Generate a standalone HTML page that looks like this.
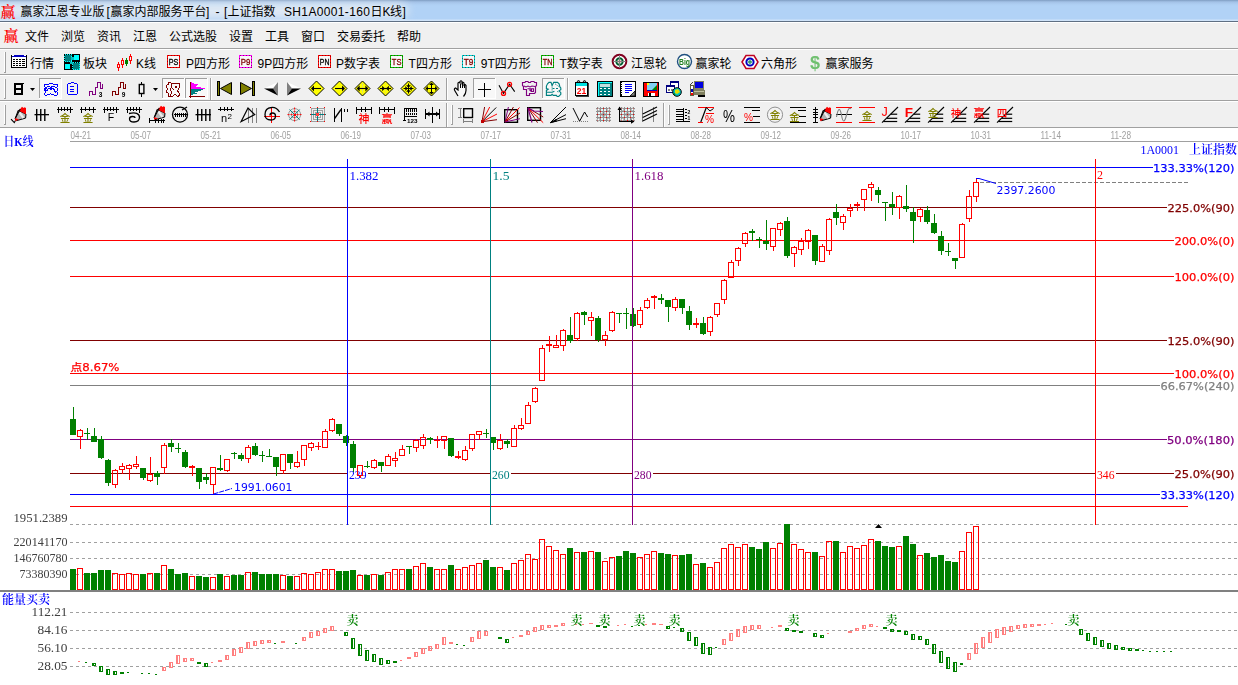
<!DOCTYPE html>
<html><head><meta charset="utf-8"><title>赢家江恩专业版</title>
<style>
html,body{margin:0;padding:0;background:#fff;overflow:hidden}
body{width:1238px;height:685px;position:relative;font-family:"Liberation Sans","Noto Sans CJK SC",sans-serif;font-size:12px;color:#000}
#title{position:absolute;left:0;top:0;width:1238px;height:21px;overflow:hidden;background:linear-gradient(to bottom,#7d9cc1 0,#93b1d6 1px,#a3c2e7 2px,#adcdf1 4px,#b1d2f6 6px,#b1d2f6 19px,#cfe3f9 20px,#cfe3f9 21px)}
#glow{position:absolute;left:-20px;top:3px;width:428px;height:15px;background:rgba(238,240,243,.8);filter:blur(5px);border-radius:8px}
#title .tt{position:absolute;top:3.6px;line-height:17px;font-size:12px;white-space:pre}
.logo{position:absolute;color:#ff0000;font-family:"Liberation Serif","Noto Serif CJK SC",serif;font-size:15px;line-height:15px;font-weight:600}
#l1{position:absolute;left:0;top:21px;width:1238px;height:1px;background:#5f6f83}
#l2{position:absolute;left:0;top:22px;width:1238px;height:1px;background:#fff}
#chrome{position:absolute;left:0;top:23px;width:1238px;height:105px;background:#f0f0f0}
.sep{position:absolute;left:0;width:1238px;height:1px;background:#a0a0a0}
.sepw{position:absolute;left:0;width:1238px;height:1px;background:#fff}
.mi{position:absolute;top:29px;margin-left:-1px;line-height:16px;white-space:nowrap}
.tb{position:absolute;top:56px;margin-left:-1px;line-height:16px;white-space:nowrap}
svg{position:absolute;left:0;top:0}
</style></head><body>
<div id="title"><div id="glow"></div><span class="logo" style="left:0.5px;top:4.5px">赢</span><span class="tt" style="left:20.5px">赢家江恩专业版</span><span class="tt" style="left:106.5px">[</span><span class="tt" style="left:110.5px">赢家内部服务平台</span><span class="tt" style="left:206px">] </span><span class="tt" style="left:215.5px">- </span><span class="tt" style="left:224px">[</span><span class="tt" style="left:227.5px">上证指数  </span><span class="tt" style="left:284px;letter-spacing:0.35px">SH1A0001-160</span><span class="tt" style="left:370.5px">日</span><span class="tt" style="left:382.5px">K</span><span class="tt" style="left:390px">线</span><span class="tt" style="left:402.5px">]</span></div>
<div id="l1"></div><div id="l2"></div>
<div id="chrome"></div>
<span class="logo" style="left:3.5px;top:28.5px">赢</span>
<span class="mi" style="left:26px">文件</span><span class="mi" style="left:62px">浏览</span><span class="mi" style="left:98px">资讯</span><span class="mi" style="left:134px">江恩</span><span class="mi" style="left:170px">公式选股</span><span class="mi" style="left:230px">设置</span><span class="mi" style="left:266px">工具</span><span class="mi" style="left:302px">窗口</span><span class="mi" style="left:338px">交易委托</span><span class="mi" style="left:398px">帮助</span>
<div class="sep" style="top:48px"></div><div class="sepw" style="top:49px"></div>
<span class="tb" style="left:31px">行情</span><span class="tb" style="left:84px">板块</span><span class="tb" style="left:137px">K线</span><span class="tb" style="left:187px">P四方形</span><span class="tb" style="left:258.5px">9P四方形</span><span class="tb" style="left:337px">P数字表</span><span class="tb" style="left:409.6px">T四方形</span><span class="tb" style="left:481.8px">9T四方形</span><span class="tb" style="left:560.5px">T数字表</span><span class="tb" style="left:632px">江恩轮</span><span class="tb" style="left:696.5px">赢家轮</span><span class="tb" style="left:762px">六角形</span><span class="tb" style="left:826.5px">赢家服务</span>
<div class="sep" style="top:74px"></div><div class="sepw" style="top:75px"></div>
<div class="sep" style="top:100px"></div><div class="sepw" style="top:101px"></div>
<div class="sep" style="top:127px"></div>
<svg width="1238" height="685" viewBox="0 0 1238 685" shape-rendering="crispEdges" style="will-change:transform">
<rect x="70" y="141" width="1168" height="1" fill="#a0a0a0"/>
<text x="70.5" y="139" fill="#a0a0a0" font-size="10.4" font-family="'Liberation Sans','Noto Sans CJK SC',sans-serif" textLength="20.5" lengthAdjust="spacingAndGlyphs">04-21</text>
<text x="130.5" y="139" fill="#a0a0a0" font-size="10.4" font-family="'Liberation Sans','Noto Sans CJK SC',sans-serif" textLength="20.5" lengthAdjust="spacingAndGlyphs">05-07</text>
<text x="200.5" y="139" fill="#a0a0a0" font-size="10.4" font-family="'Liberation Sans','Noto Sans CJK SC',sans-serif" textLength="20.5" lengthAdjust="spacingAndGlyphs">05-21</text>
<text x="270.5" y="139" fill="#a0a0a0" font-size="10.4" font-family="'Liberation Sans','Noto Sans CJK SC',sans-serif" textLength="20.5" lengthAdjust="spacingAndGlyphs">06-05</text>
<text x="340.5" y="139" fill="#a0a0a0" font-size="10.4" font-family="'Liberation Sans','Noto Sans CJK SC',sans-serif" textLength="20.5" lengthAdjust="spacingAndGlyphs">06-19</text>
<text x="410.5" y="139" fill="#a0a0a0" font-size="10.4" font-family="'Liberation Sans','Noto Sans CJK SC',sans-serif" textLength="20.5" lengthAdjust="spacingAndGlyphs">07-03</text>
<text x="480.5" y="139" fill="#a0a0a0" font-size="10.4" font-family="'Liberation Sans','Noto Sans CJK SC',sans-serif" textLength="20.5" lengthAdjust="spacingAndGlyphs">07-17</text>
<text x="550.5" y="139" fill="#a0a0a0" font-size="10.4" font-family="'Liberation Sans','Noto Sans CJK SC',sans-serif" textLength="20.5" lengthAdjust="spacingAndGlyphs">07-31</text>
<text x="620.5" y="139" fill="#a0a0a0" font-size="10.4" font-family="'Liberation Sans','Noto Sans CJK SC',sans-serif" textLength="20.5" lengthAdjust="spacingAndGlyphs">08-14</text>
<text x="690.5" y="139" fill="#a0a0a0" font-size="10.4" font-family="'Liberation Sans','Noto Sans CJK SC',sans-serif" textLength="20.5" lengthAdjust="spacingAndGlyphs">08-28</text>
<text x="760.5" y="139" fill="#a0a0a0" font-size="10.4" font-family="'Liberation Sans','Noto Sans CJK SC',sans-serif" textLength="20.5" lengthAdjust="spacingAndGlyphs">09-12</text>
<text x="830.5" y="139" fill="#a0a0a0" font-size="10.4" font-family="'Liberation Sans','Noto Sans CJK SC',sans-serif" textLength="20.5" lengthAdjust="spacingAndGlyphs">09-26</text>
<text x="900.5" y="139" fill="#a0a0a0" font-size="10.4" font-family="'Liberation Sans','Noto Sans CJK SC',sans-serif" textLength="20.5" lengthAdjust="spacingAndGlyphs">10-17</text>
<text x="970.5" y="139" fill="#a0a0a0" font-size="10.4" font-family="'Liberation Sans','Noto Sans CJK SC',sans-serif" textLength="20.5" lengthAdjust="spacingAndGlyphs">10-31</text>
<text x="1040.5" y="139" fill="#a0a0a0" font-size="10.4" font-family="'Liberation Sans','Noto Sans CJK SC',sans-serif" textLength="20.5" lengthAdjust="spacingAndGlyphs">11-14</text>
<text x="1110.5" y="139" fill="#a0a0a0" font-size="10.4" font-family="'Liberation Sans','Noto Sans CJK SC',sans-serif" textLength="20.5" lengthAdjust="spacingAndGlyphs">11-28</text>
<text x="3.5" y="146" fill="#0000ff" font-size="12" font-family="'Liberation Serif','Noto Serif CJK SC',serif" textLength="30" lengthAdjust="spacingAndGlyphs" font-weight="600">日K线</text>
<text x="1140.5" y="154" fill="#0000ff" font-size="12" font-family="'Liberation Serif','Noto Serif CJK SC',serif" textLength="38.5" lengthAdjust="spacingAndGlyphs">1A0001</text>
<text x="1189" y="154" fill="#0000ff" font-size="12" font-family="'Liberation Serif','Noto Serif CJK SC',serif" font-weight="600">上证指数</text>
<line x1="70" x2="1238" y1="524.5" y2="524.5" stroke="#a0a0a0" stroke-dasharray="3 3"/>
<line x1="70" x2="1238" y1="542.5" y2="542.5" stroke="#a0a0a0" stroke-dasharray="3 3"/>
<line x1="70" x2="1238" y1="558.5" y2="558.5" stroke="#a0a0a0" stroke-dasharray="3 3"/>
<line x1="70" x2="1238" y1="574.5" y2="574.5" stroke="#a0a0a0" stroke-dasharray="3 3"/>
<line x1="70" x2="1238" y1="612.5" y2="612.5" stroke="#a0a0a0" stroke-dasharray="3 3"/>
<line x1="70" x2="1238" y1="630.5" y2="630.5" stroke="#a0a0a0" stroke-dasharray="3 3"/>
<line x1="70" x2="1238" y1="648.5" y2="648.5" stroke="#a0a0a0" stroke-dasharray="3 3"/>
<line x1="70" x2="1238" y1="666.5" y2="666.5" stroke="#a0a0a0" stroke-dasharray="3 3"/>
<rect x="70" y="167" width="1083" height="1" fill="#0000ff"/>
<rect x="70" y="207" width="1097" height="1" fill="#800000"/>
<rect x="70" y="240" width="1104" height="1" fill="#ff0000"/>
<rect x="70" y="276" width="1104" height="1" fill="#ff0000"/>
<rect x="70" y="340" width="1097" height="1" fill="#800000"/>
<rect x="70" y="373" width="1104" height="1" fill="#ff0000"/>
<rect x="70" y="385" width="1090" height="1" fill="#808080"/>
<rect x="70" y="439" width="1097" height="1" fill="#800080"/>
<rect x="70" y="473" width="1104" height="1" fill="#800000"/>
<rect x="70" y="494" width="1090" height="1" fill="#0000ff"/>
<rect x="70" y="506" width="1118" height="1" fill="#ff0000"/>
<line x1="980" x2="1189" y1="182.5" y2="182.5" stroke="#808080" stroke-dasharray="4 2"/>
<rect x="348" y="470" width="19.5" height="11" fill="#fff"/>
<text x="349" y="479" fill="#0000ff" font-size="12" font-family="'Liberation Serif','Noto Serif CJK SC',serif" textLength="17.5" lengthAdjust="spacingAndGlyphs">239</text>
<rect x="491" y="470" width="19.5" height="11" fill="#fff"/>
<text x="492" y="479" fill="#008080" font-size="12" font-family="'Liberation Serif','Noto Serif CJK SC',serif" textLength="17.5" lengthAdjust="spacingAndGlyphs">260</text>
<rect x="633" y="470" width="19.5" height="11" fill="#fff"/>
<text x="634" y="479" fill="#800080" font-size="12" font-family="'Liberation Serif','Noto Serif CJK SC',serif" textLength="17.5" lengthAdjust="spacingAndGlyphs">280</text>
<rect x="1096" y="470" width="19.5" height="11" fill="#fff"/>
<text x="1097" y="479" fill="#ff0000" font-size="12" font-family="'Liberation Serif','Noto Serif CJK SC',serif" textLength="17.5" lengthAdjust="spacingAndGlyphs">346</text>
<rect x="73" y="407" width="1" height="28" fill="#008000"/>
<rect x="70" y="419" width="6" height="16" fill="#008000"/>
<rect x="77.5" y="430.5" width="5" height="6" fill="none" stroke="#ff0000"/>
<rect x="80" y="429" width="1" height="1" fill="#ff0000"/>
<rect x="80" y="437" width="1" height="12" fill="#ff0000"/>
<rect x="87" y="428" width="1" height="12" fill="#008000"/>
<rect x="84" y="433" width="6" height="1" fill="#008000"/>
<rect x="94" y="428" width="1" height="14" fill="#008000"/>
<rect x="91" y="436" width="6" height="6" fill="#008000"/>
<rect x="101" y="436" width="1" height="23" fill="#008000"/>
<rect x="98" y="439" width="6" height="19" fill="#008000"/>
<rect x="108" y="459" width="1" height="27" fill="#008000"/>
<rect x="105" y="460" width="6" height="23" fill="#008000"/>
<rect x="112.5" y="470.5" width="5" height="14" fill="none" stroke="#ff0000"/>
<rect x="115" y="469" width="1" height="1" fill="#ff0000"/>
<rect x="115" y="485" width="1" height="3" fill="#ff0000"/>
<rect x="119.5" y="466.5" width="5" height="3" fill="none" stroke="#ff0000"/>
<rect x="122" y="463" width="1" height="3" fill="#ff0000"/>
<rect x="122" y="470" width="1" height="4" fill="#ff0000"/>
<rect x="126.5" y="465.5" width="5" height="3" fill="none" stroke="#ff0000"/>
<rect x="129" y="464" width="1" height="1" fill="#ff0000"/>
<rect x="129" y="469" width="1" height="11" fill="#ff0000"/>
<rect x="133.5" y="464.5" width="5" height="2" fill="none" stroke="#ff0000"/>
<rect x="136" y="456" width="1" height="8" fill="#ff0000"/>
<rect x="136" y="467" width="1" height="2" fill="#ff0000"/>
<rect x="143" y="468" width="1" height="12" fill="#008000"/>
<rect x="140" y="468" width="6" height="10" fill="#008000"/>
<rect x="147.5" y="474.5" width="5" height="6" fill="none" stroke="#ff0000"/>
<rect x="150" y="457" width="1" height="17" fill="#ff0000"/>
<rect x="150" y="481" width="1" height="1" fill="#ff0000"/>
<rect x="157" y="471" width="1" height="14" fill="#008000"/>
<rect x="154" y="473" width="6" height="4" fill="#008000"/>
<rect x="161.5" y="445.5" width="5" height="22" fill="none" stroke="#ff0000"/>
<rect x="164" y="443" width="1" height="2" fill="#ff0000"/>
<rect x="164" y="468" width="1" height="6" fill="#ff0000"/>
<rect x="171" y="439" width="1" height="13" fill="#008000"/>
<rect x="168" y="443" width="6" height="4" fill="#008000"/>
<rect x="178" y="443" width="1" height="10" fill="#008000"/>
<rect x="175" y="448" width="6" height="1" fill="#008000"/>
<rect x="185" y="450" width="1" height="18" fill="#008000"/>
<rect x="182" y="452" width="6" height="15" fill="#008000"/>
<rect x="189.5" y="466.5" width="5" height="1" fill="none" stroke="#ff0000"/>
<rect x="192" y="465" width="1" height="1" fill="#ff0000"/>
<rect x="192" y="468" width="1" height="8" fill="#ff0000"/>
<rect x="199" y="468" width="1" height="21" fill="#008000"/>
<rect x="196" y="468" width="6" height="14" fill="#008000"/>
<rect x="206" y="473" width="1" height="11" fill="#008000"/>
<rect x="203" y="477" width="6" height="3" fill="#008000"/>
<rect x="210.5" y="467.5" width="5" height="17" fill="none" stroke="#ff0000"/>
<rect x="213" y="485" width="1" height="9" fill="#ff0000"/>
<rect x="220" y="455" width="1" height="16" fill="#008000"/>
<rect x="217" y="468" width="6" height="2" fill="#008000"/>
<rect x="224.5" y="459.5" width="5" height="11" fill="none" stroke="#ff0000"/>
<rect x="227" y="471" width="1" height="1" fill="#ff0000"/>
<rect x="234" y="452" width="1" height="7" fill="#008000"/>
<rect x="231" y="453" width="6" height="1" fill="#008000"/>
<rect x="241" y="453" width="1" height="8" fill="#008000"/>
<rect x="238" y="455" width="6" height="4" fill="#008000"/>
<rect x="245.5" y="447.5" width="5" height="11" fill="none" stroke="#ff0000"/>
<rect x="248" y="445" width="1" height="2" fill="#ff0000"/>
<rect x="248" y="459" width="1" height="4" fill="#ff0000"/>
<rect x="255" y="443" width="1" height="13" fill="#008000"/>
<rect x="252" y="446" width="6" height="9" fill="#008000"/>
<rect x="262" y="451" width="1" height="11" fill="#008000"/>
<rect x="259" y="455" width="6" height="1" fill="#008000"/>
<rect x="269" y="449" width="1" height="8" fill="#008000"/>
<rect x="266" y="456" width="6" height="1" fill="#008000"/>
<rect x="276" y="457" width="1" height="19" fill="#008000"/>
<rect x="273" y="457" width="6" height="10" fill="#008000"/>
<rect x="280.5" y="454.5" width="5" height="16" fill="none" stroke="#ff0000"/>
<rect x="283" y="471" width="1" height="3" fill="#ff0000"/>
<rect x="290" y="454" width="1" height="15" fill="#008000"/>
<rect x="287" y="454" width="6" height="9" fill="#008000"/>
<rect x="294.5" y="462.5" width="5" height="4" fill="none" stroke="#ff0000"/>
<rect x="297" y="451" width="1" height="11" fill="#ff0000"/>
<rect x="297" y="467" width="1" height="1" fill="#ff0000"/>
<rect x="301.5" y="445.5" width="5" height="14" fill="none" stroke="#ff0000"/>
<rect x="304" y="460" width="1" height="6" fill="#ff0000"/>
<rect x="308.5" y="443.5" width="5" height="4" fill="none" stroke="#ff0000"/>
<rect x="311" y="442" width="1" height="1" fill="#ff0000"/>
<rect x="311" y="448" width="1" height="3" fill="#ff0000"/>
<rect x="315" y="446" width="6" height="1" fill="#ff0000"/>
<rect x="318" y="442" width="1" height="4" fill="#ff0000"/>
<rect x="318" y="447" width="1" height="3" fill="#ff0000"/>
<rect x="322.5" y="431.5" width="5" height="16" fill="none" stroke="#ff0000"/>
<rect x="325" y="429" width="1" height="2" fill="#ff0000"/>
<rect x="329.5" y="419.5" width="5" height="11" fill="none" stroke="#ff0000"/>
<rect x="332" y="418" width="1" height="1" fill="#ff0000"/>
<rect x="332" y="431" width="1" height="1" fill="#ff0000"/>
<rect x="339" y="424" width="1" height="12" fill="#008000"/>
<rect x="336" y="424" width="6" height="10" fill="#008000"/>
<rect x="346" y="435" width="1" height="11" fill="#008000"/>
<rect x="343" y="436" width="6" height="7" fill="#008000"/>
<rect x="353" y="441" width="1" height="31" fill="#008000"/>
<rect x="350" y="444" width="6" height="24" fill="#008000"/>
<rect x="357.5" y="465.5" width="5" height="10" fill="none" stroke="#ff0000"/>
<rect x="360" y="476" width="1" height="2" fill="#ff0000"/>
<rect x="367" y="461" width="1" height="7" fill="#008000"/>
<rect x="364" y="466" width="6" height="1" fill="#008000"/>
<rect x="371.5" y="460.5" width="5" height="7" fill="none" stroke="#ff0000"/>
<rect x="374" y="459" width="1" height="1" fill="#ff0000"/>
<rect x="374" y="468" width="1" height="1" fill="#ff0000"/>
<rect x="381" y="462" width="1" height="10" fill="#008000"/>
<rect x="378" y="462" width="6" height="4" fill="#008000"/>
<rect x="385.5" y="456.5" width="5" height="9" fill="none" stroke="#ff0000"/>
<rect x="388" y="454" width="1" height="2" fill="#ff0000"/>
<rect x="392.5" y="458.5" width="5" height="2" fill="none" stroke="#ff0000"/>
<rect x="395" y="452" width="1" height="6" fill="#ff0000"/>
<rect x="395" y="461" width="1" height="6" fill="#ff0000"/>
<rect x="399.5" y="449.5" width="5" height="6" fill="none" stroke="#ff0000"/>
<rect x="402" y="445" width="1" height="4" fill="#ff0000"/>
<rect x="409" y="446" width="1" height="8" fill="#008000"/>
<rect x="406" y="446" width="6" height="1" fill="#008000"/>
<rect x="413.5" y="440.5" width="5" height="7" fill="none" stroke="#ff0000"/>
<rect x="416" y="439" width="1" height="1" fill="#ff0000"/>
<rect x="416" y="448" width="1" height="4" fill="#ff0000"/>
<rect x="420.5" y="437.5" width="5" height="8" fill="none" stroke="#ff0000"/>
<rect x="423" y="434" width="1" height="3" fill="#ff0000"/>
<rect x="423" y="446" width="1" height="3" fill="#ff0000"/>
<rect x="430" y="437" width="1" height="7" fill="#008000"/>
<rect x="427" y="438" width="6" height="2" fill="#008000"/>
<rect x="434" y="440" width="6" height="1" fill="#ff0000"/>
<rect x="437" y="436" width="1" height="4" fill="#ff0000"/>
<rect x="437" y="441" width="1" height="7" fill="#ff0000"/>
<rect x="441.5" y="436.5" width="5" height="4" fill="none" stroke="#ff0000"/>
<rect x="444" y="441" width="1" height="8" fill="#ff0000"/>
<rect x="451" y="438" width="1" height="19" fill="#008000"/>
<rect x="448" y="438" width="6" height="18" fill="#008000"/>
<rect x="455.5" y="456.5" width="5" height="1" fill="none" stroke="#ff0000"/>
<rect x="458" y="451" width="1" height="5" fill="#ff0000"/>
<rect x="458" y="458" width="1" height="1" fill="#ff0000"/>
<rect x="462.5" y="450.5" width="5" height="9" fill="none" stroke="#ff0000"/>
<rect x="465" y="446" width="1" height="4" fill="#ff0000"/>
<rect x="465" y="460" width="1" height="1" fill="#ff0000"/>
<rect x="469.5" y="434.5" width="5" height="14" fill="none" stroke="#ff0000"/>
<rect x="472" y="449" width="1" height="2" fill="#ff0000"/>
<rect x="476.5" y="431.5" width="5" height="3" fill="none" stroke="#ff0000"/>
<rect x="479" y="435" width="1" height="5" fill="#ff0000"/>
<rect x="486" y="429" width="1" height="9" fill="#008000"/>
<rect x="483" y="433" width="6" height="1" fill="#008000"/>
<rect x="493" y="437" width="1" height="13" fill="#008000"/>
<rect x="490" y="437" width="6" height="6" fill="#008000"/>
<rect x="497.5" y="440.5" width="5" height="8" fill="none" stroke="#ff0000"/>
<rect x="500" y="434" width="1" height="6" fill="#ff0000"/>
<rect x="500" y="449" width="1" height="1" fill="#ff0000"/>
<rect x="507" y="439" width="1" height="9" fill="#008000"/>
<rect x="504" y="441" width="6" height="3" fill="#008000"/>
<rect x="511.5" y="428.5" width="5" height="18" fill="none" stroke="#ff0000"/>
<rect x="514" y="425" width="1" height="3" fill="#ff0000"/>
<rect x="518.5" y="425.5" width="5" height="3" fill="none" stroke="#ff0000"/>
<rect x="521" y="418" width="1" height="7" fill="#ff0000"/>
<rect x="521" y="429" width="1" height="1" fill="#ff0000"/>
<rect x="525.5" y="405.5" width="5" height="18" fill="none" stroke="#ff0000"/>
<rect x="528" y="402" width="1" height="3" fill="#ff0000"/>
<rect x="532.5" y="388.5" width="5" height="13" fill="none" stroke="#ff0000"/>
<rect x="535" y="387" width="1" height="1" fill="#ff0000"/>
<rect x="535" y="402" width="1" height="1" fill="#ff0000"/>
<rect x="539.5" y="348.5" width="5" height="32" fill="none" stroke="#ff0000"/>
<rect x="542" y="345" width="1" height="3" fill="#ff0000"/>
<rect x="546.5" y="344.5" width="5" height="1" fill="none" stroke="#ff0000"/>
<rect x="549" y="336" width="1" height="8" fill="#ff0000"/>
<rect x="549" y="346" width="1" height="6" fill="#ff0000"/>
<rect x="553.5" y="345.5" width="5" height="2" fill="none" stroke="#ff0000"/>
<rect x="556" y="335" width="1" height="10" fill="#ff0000"/>
<rect x="560.5" y="330.5" width="5" height="15" fill="none" stroke="#ff0000"/>
<rect x="563" y="329" width="1" height="1" fill="#ff0000"/>
<rect x="563" y="346" width="1" height="5" fill="#ff0000"/>
<rect x="570" y="317" width="1" height="26" fill="#008000"/>
<rect x="567" y="335" width="6" height="6" fill="#008000"/>
<rect x="574.5" y="313.5" width="5" height="25" fill="none" stroke="#ff0000"/>
<rect x="577" y="312" width="1" height="1" fill="#ff0000"/>
<rect x="577" y="339" width="1" height="2" fill="#ff0000"/>
<rect x="584" y="311" width="1" height="14" fill="#008000"/>
<rect x="581" y="312" width="6" height="3" fill="#008000"/>
<rect x="588.5" y="317.5" width="5" height="3" fill="none" stroke="#ff0000"/>
<rect x="591" y="312" width="1" height="5" fill="#ff0000"/>
<rect x="591" y="321" width="1" height="15" fill="#ff0000"/>
<rect x="598" y="316" width="1" height="26" fill="#008000"/>
<rect x="595" y="318" width="6" height="22" fill="#008000"/>
<rect x="602.5" y="335.5" width="5" height="4" fill="none" stroke="#ff0000"/>
<rect x="605" y="331" width="1" height="4" fill="#ff0000"/>
<rect x="605" y="340" width="1" height="6" fill="#ff0000"/>
<rect x="609.5" y="312.5" width="5" height="18" fill="none" stroke="#ff0000"/>
<rect x="612" y="311" width="1" height="1" fill="#ff0000"/>
<rect x="612" y="331" width="1" height="1" fill="#ff0000"/>
<rect x="619" y="313" width="1" height="10" fill="#008000"/>
<rect x="616" y="313" width="6" height="1" fill="#008000"/>
<rect x="626" y="308" width="1" height="21" fill="#008000"/>
<rect x="623" y="313" width="6" height="1" fill="#008000"/>
<rect x="633" y="308" width="1" height="19" fill="#008000"/>
<rect x="630" y="314" width="6" height="12" fill="#008000"/>
<rect x="637.5" y="310.5" width="5" height="14" fill="none" stroke="#ff0000"/>
<rect x="640" y="307" width="1" height="3" fill="#ff0000"/>
<rect x="640" y="325" width="1" height="3" fill="#ff0000"/>
<rect x="644.5" y="300.5" width="5" height="7" fill="none" stroke="#ff0000"/>
<rect x="647" y="298" width="1" height="2" fill="#ff0000"/>
<rect x="647" y="308" width="1" height="1" fill="#ff0000"/>
<rect x="651.5" y="296.5" width="5" height="1" fill="none" stroke="#ff0000"/>
<rect x="654" y="295" width="1" height="1" fill="#ff0000"/>
<rect x="654" y="298" width="1" height="11" fill="#ff0000"/>
<rect x="661" y="294" width="1" height="10" fill="#008000"/>
<rect x="658" y="298" width="6" height="2" fill="#008000"/>
<rect x="668" y="300" width="1" height="22" fill="#008000"/>
<rect x="665" y="300" width="6" height="7" fill="#008000"/>
<rect x="672.5" y="299.5" width="5" height="8" fill="none" stroke="#ff0000"/>
<rect x="675" y="297" width="1" height="2" fill="#ff0000"/>
<rect x="675" y="308" width="1" height="3" fill="#ff0000"/>
<rect x="682" y="299" width="1" height="15" fill="#008000"/>
<rect x="679" y="299" width="6" height="9" fill="#008000"/>
<rect x="689" y="306" width="1" height="24" fill="#008000"/>
<rect x="686" y="311" width="6" height="14" fill="#008000"/>
<rect x="693.5" y="323.5" width="5" height="1" fill="none" stroke="#ff0000"/>
<rect x="696" y="318" width="1" height="5" fill="#ff0000"/>
<rect x="696" y="325" width="1" height="3" fill="#ff0000"/>
<rect x="703" y="317" width="1" height="18" fill="#008000"/>
<rect x="700" y="323" width="6" height="11" fill="#008000"/>
<rect x="707.5" y="317.5" width="5" height="14" fill="none" stroke="#ff0000"/>
<rect x="710" y="316" width="1" height="1" fill="#ff0000"/>
<rect x="710" y="332" width="1" height="4" fill="#ff0000"/>
<rect x="714.5" y="303.5" width="5" height="11" fill="none" stroke="#ff0000"/>
<rect x="717" y="315" width="1" height="2" fill="#ff0000"/>
<rect x="721.5" y="280.5" width="5" height="19" fill="none" stroke="#ff0000"/>
<rect x="724" y="279" width="1" height="1" fill="#ff0000"/>
<rect x="724" y="300" width="1" height="4" fill="#ff0000"/>
<rect x="728.5" y="262.5" width="5" height="15" fill="none" stroke="#ff0000"/>
<rect x="731" y="260" width="1" height="2" fill="#ff0000"/>
<rect x="735.5" y="248.5" width="5" height="12" fill="none" stroke="#ff0000"/>
<rect x="738" y="247" width="1" height="1" fill="#ff0000"/>
<rect x="738" y="261" width="1" height="5" fill="#ff0000"/>
<rect x="742.5" y="233.5" width="5" height="10" fill="none" stroke="#ff0000"/>
<rect x="745" y="232" width="1" height="1" fill="#ff0000"/>
<rect x="745" y="244" width="1" height="3" fill="#ff0000"/>
<rect x="752" y="229" width="1" height="12" fill="#008000"/>
<rect x="749" y="231" width="6" height="2" fill="#008000"/>
<rect x="759" y="237" width="1" height="11" fill="#008000"/>
<rect x="756" y="239" width="6" height="1" fill="#008000"/>
<rect x="766" y="220" width="1" height="30" fill="#008000"/>
<rect x="763" y="241" width="6" height="3" fill="#008000"/>
<rect x="770.5" y="228.5" width="5" height="18" fill="none" stroke="#ff0000"/>
<rect x="773" y="247" width="1" height="4" fill="#ff0000"/>
<rect x="777.5" y="223.5" width="5" height="6" fill="none" stroke="#ff0000"/>
<rect x="780" y="222" width="1" height="1" fill="#ff0000"/>
<rect x="780" y="230" width="1" height="6" fill="#ff0000"/>
<rect x="787" y="217" width="1" height="41" fill="#008000"/>
<rect x="784" y="221" width="6" height="35" fill="#008000"/>
<rect x="791.5" y="247.5" width="5" height="6" fill="none" stroke="#ff0000"/>
<rect x="794" y="246" width="1" height="1" fill="#ff0000"/>
<rect x="794" y="254" width="1" height="13" fill="#ff0000"/>
<rect x="798.5" y="241.5" width="5" height="8" fill="none" stroke="#ff0000"/>
<rect x="801" y="238" width="1" height="3" fill="#ff0000"/>
<rect x="801" y="250" width="1" height="5" fill="#ff0000"/>
<rect x="805.5" y="230.5" width="5" height="11" fill="none" stroke="#ff0000"/>
<rect x="808" y="229" width="1" height="1" fill="#ff0000"/>
<rect x="808" y="242" width="1" height="7" fill="#ff0000"/>
<rect x="815" y="235" width="1" height="30" fill="#008000"/>
<rect x="812" y="235" width="6" height="26" fill="#008000"/>
<rect x="819.5" y="246.5" width="5" height="15" fill="none" stroke="#ff0000"/>
<rect x="822" y="244" width="1" height="2" fill="#ff0000"/>
<rect x="826.5" y="219.5" width="5" height="31" fill="none" stroke="#ff0000"/>
<rect x="829" y="218" width="1" height="1" fill="#ff0000"/>
<rect x="829" y="251" width="1" height="4" fill="#ff0000"/>
<rect x="836" y="204" width="1" height="21" fill="#008000"/>
<rect x="833" y="212" width="6" height="6" fill="#008000"/>
<rect x="840.5" y="216.5" width="5" height="6" fill="none" stroke="#ff0000"/>
<rect x="843" y="214" width="1" height="2" fill="#ff0000"/>
<rect x="843" y="223" width="1" height="7" fill="#ff0000"/>
<rect x="847.5" y="208.5" width="5" height="2" fill="none" stroke="#ff0000"/>
<rect x="850" y="204" width="1" height="4" fill="#ff0000"/>
<rect x="850" y="211" width="1" height="6" fill="#ff0000"/>
<rect x="854.5" y="204.5" width="5" height="1" fill="none" stroke="#ff0000"/>
<rect x="857" y="202" width="1" height="2" fill="#ff0000"/>
<rect x="857" y="206" width="1" height="5" fill="#ff0000"/>
<rect x="861.5" y="189.5" width="5" height="10" fill="none" stroke="#ff0000"/>
<rect x="864" y="200" width="1" height="11" fill="#ff0000"/>
<rect x="868.5" y="184.5" width="5" height="3" fill="none" stroke="#ff0000"/>
<rect x="871" y="182" width="1" height="2" fill="#ff0000"/>
<rect x="871" y="188" width="1" height="13" fill="#ff0000"/>
<rect x="878" y="187" width="1" height="16" fill="#008000"/>
<rect x="875" y="190" width="6" height="5" fill="#008000"/>
<rect x="885" y="202" width="1" height="19" fill="#008000"/>
<rect x="882" y="202" width="6" height="1" fill="#008000"/>
<rect x="892" y="192" width="1" height="23" fill="#008000"/>
<rect x="889" y="204" width="6" height="3" fill="#008000"/>
<rect x="896.5" y="196.5" width="5" height="11" fill="none" stroke="#ff0000"/>
<rect x="899" y="195" width="1" height="1" fill="#ff0000"/>
<rect x="899" y="208" width="1" height="11" fill="#ff0000"/>
<rect x="906" y="185" width="1" height="27" fill="#008000"/>
<rect x="903" y="206" width="6" height="3" fill="#008000"/>
<rect x="913" y="207" width="1" height="36" fill="#008000"/>
<rect x="910" y="212" width="6" height="9" fill="#008000"/>
<rect x="917.5" y="209.5" width="5" height="7" fill="none" stroke="#ff0000"/>
<rect x="920" y="208" width="1" height="1" fill="#ff0000"/>
<rect x="920" y="217" width="1" height="5" fill="#ff0000"/>
<rect x="927" y="206" width="1" height="18" fill="#008000"/>
<rect x="924" y="210" width="6" height="12" fill="#008000"/>
<rect x="934" y="214" width="1" height="20" fill="#008000"/>
<rect x="931" y="223" width="6" height="10" fill="#008000"/>
<rect x="941" y="231" width="1" height="24" fill="#008000"/>
<rect x="938" y="236" width="6" height="15" fill="#008000"/>
<rect x="948" y="243" width="1" height="13" fill="#008000"/>
<rect x="945" y="251" width="6" height="1" fill="#008000"/>
<rect x="955" y="258" width="1" height="11" fill="#008000"/>
<rect x="952" y="258" width="6" height="3" fill="#008000"/>
<rect x="959.5" y="224.5" width="5" height="33" fill="none" stroke="#ff0000"/>
<rect x="962" y="223" width="1" height="1" fill="#ff0000"/>
<rect x="966.5" y="196.5" width="5" height="22" fill="none" stroke="#ff0000"/>
<rect x="969" y="190" width="1" height="6" fill="#ff0000"/>
<rect x="969" y="219" width="1" height="3" fill="#ff0000"/>
<rect x="973.5" y="182.5" width="5" height="14" fill="none" stroke="#ff0000"/>
<rect x="976" y="178" width="1" height="4" fill="#ff0000"/>
<rect x="976" y="197" width="1" height="5" fill="#ff0000"/>
<rect x="70" y="569" width="6" height="21" fill="#008000"/>
<rect x="77.5" y="568.5" width="5" height="21" fill="none" stroke="#ff0000"/>
<rect x="84" y="573" width="6" height="17" fill="#008000"/>
<rect x="91" y="573" width="6" height="17" fill="#008000"/>
<rect x="98" y="570" width="6" height="20" fill="#008000"/>
<rect x="105" y="570" width="6" height="20" fill="#008000"/>
<rect x="112.5" y="573.5" width="5" height="16" fill="none" stroke="#ff0000"/>
<rect x="119.5" y="574.5" width="5" height="15" fill="none" stroke="#ff0000"/>
<rect x="126.5" y="573.5" width="5" height="16" fill="none" stroke="#ff0000"/>
<rect x="133.5" y="574.5" width="5" height="15" fill="none" stroke="#ff0000"/>
<rect x="140" y="574" width="6" height="16" fill="#008000"/>
<rect x="147.5" y="573.5" width="5" height="16" fill="none" stroke="#ff0000"/>
<rect x="154" y="573" width="6" height="17" fill="#008000"/>
<rect x="161.5" y="565.5" width="5" height="24" fill="none" stroke="#ff0000"/>
<rect x="168" y="569" width="6" height="21" fill="#008000"/>
<rect x="175" y="574" width="6" height="16" fill="#008000"/>
<rect x="182" y="573" width="6" height="17" fill="#008000"/>
<rect x="189.5" y="576.5" width="5" height="13" fill="none" stroke="#ff0000"/>
<rect x="196" y="576" width="6" height="14" fill="#008000"/>
<rect x="203" y="577" width="6" height="13" fill="#008000"/>
<rect x="210.5" y="577.5" width="5" height="12" fill="none" stroke="#ff0000"/>
<rect x="217" y="574" width="6" height="16" fill="#008000"/>
<rect x="224.5" y="576.5" width="5" height="13" fill="none" stroke="#ff0000"/>
<rect x="231" y="575" width="6" height="15" fill="#008000"/>
<rect x="238" y="575" width="6" height="15" fill="#008000"/>
<rect x="245.5" y="572.5" width="5" height="17" fill="none" stroke="#ff0000"/>
<rect x="252" y="572" width="6" height="18" fill="#008000"/>
<rect x="259" y="574" width="6" height="16" fill="#008000"/>
<rect x="266" y="574" width="6" height="16" fill="#008000"/>
<rect x="273" y="574" width="6" height="16" fill="#008000"/>
<rect x="280.5" y="575.5" width="5" height="14" fill="none" stroke="#ff0000"/>
<rect x="287" y="576" width="6" height="14" fill="#008000"/>
<rect x="294.5" y="576.5" width="5" height="13" fill="none" stroke="#ff0000"/>
<rect x="301.5" y="573.5" width="5" height="16" fill="none" stroke="#ff0000"/>
<rect x="308.5" y="574.5" width="5" height="15" fill="none" stroke="#ff0000"/>
<rect x="315.5" y="572.5" width="5" height="17" fill="none" stroke="#ff0000"/>
<rect x="322.5" y="569.5" width="5" height="20" fill="none" stroke="#ff0000"/>
<rect x="329.5" y="569.5" width="5" height="20" fill="none" stroke="#ff0000"/>
<rect x="336" y="571" width="6" height="19" fill="#008000"/>
<rect x="343" y="571" width="6" height="19" fill="#008000"/>
<rect x="350" y="570" width="6" height="20" fill="#008000"/>
<rect x="357.5" y="575.5" width="5" height="14" fill="none" stroke="#ff0000"/>
<rect x="364" y="575" width="6" height="15" fill="#008000"/>
<rect x="371.5" y="574.5" width="5" height="15" fill="none" stroke="#ff0000"/>
<rect x="378" y="575" width="6" height="15" fill="#008000"/>
<rect x="385.5" y="572.5" width="5" height="17" fill="none" stroke="#ff0000"/>
<rect x="392.5" y="569.5" width="5" height="20" fill="none" stroke="#ff0000"/>
<rect x="399.5" y="569.5" width="5" height="20" fill="none" stroke="#ff0000"/>
<rect x="406" y="569" width="6" height="21" fill="#008000"/>
<rect x="413.5" y="566.5" width="5" height="23" fill="none" stroke="#ff0000"/>
<rect x="420.5" y="563.5" width="5" height="26" fill="none" stroke="#ff0000"/>
<rect x="427" y="567" width="6" height="23" fill="#008000"/>
<rect x="434.5" y="569.5" width="5" height="20" fill="none" stroke="#ff0000"/>
<rect x="441.5" y="569.5" width="5" height="20" fill="none" stroke="#ff0000"/>
<rect x="448" y="565" width="6" height="25" fill="#008000"/>
<rect x="455.5" y="569.5" width="5" height="20" fill="none" stroke="#ff0000"/>
<rect x="462.5" y="567.5" width="5" height="22" fill="none" stroke="#ff0000"/>
<rect x="469.5" y="565.5" width="5" height="24" fill="none" stroke="#ff0000"/>
<rect x="476.5" y="563.5" width="5" height="26" fill="none" stroke="#ff0000"/>
<rect x="483" y="560" width="6" height="30" fill="#008000"/>
<rect x="490" y="567" width="6" height="23" fill="#008000"/>
<rect x="497.5" y="567.5" width="5" height="22" fill="none" stroke="#ff0000"/>
<rect x="504" y="570" width="6" height="20" fill="#008000"/>
<rect x="511.5" y="563.5" width="5" height="26" fill="none" stroke="#ff0000"/>
<rect x="518.5" y="560.5" width="5" height="29" fill="none" stroke="#ff0000"/>
<rect x="525.5" y="554.5" width="5" height="35" fill="none" stroke="#ff0000"/>
<rect x="532.5" y="559.5" width="5" height="30" fill="none" stroke="#ff0000"/>
<rect x="539.5" y="539.5" width="5" height="50" fill="none" stroke="#ff0000"/>
<rect x="546.5" y="546.5" width="5" height="43" fill="none" stroke="#ff0000"/>
<rect x="553.5" y="550.5" width="5" height="39" fill="none" stroke="#ff0000"/>
<rect x="560.5" y="554.5" width="5" height="35" fill="none" stroke="#ff0000"/>
<rect x="567" y="548" width="6" height="42" fill="#008000"/>
<rect x="574.5" y="552.5" width="5" height="37" fill="none" stroke="#ff0000"/>
<rect x="581" y="552" width="6" height="38" fill="#008000"/>
<rect x="588.5" y="551.5" width="5" height="38" fill="none" stroke="#ff0000"/>
<rect x="595" y="552" width="6" height="38" fill="#008000"/>
<rect x="602.5" y="561.5" width="5" height="28" fill="none" stroke="#ff0000"/>
<rect x="609.5" y="557.5" width="5" height="32" fill="none" stroke="#ff0000"/>
<rect x="616" y="556" width="6" height="34" fill="#008000"/>
<rect x="623" y="551" width="6" height="39" fill="#008000"/>
<rect x="630" y="553" width="6" height="37" fill="#008000"/>
<rect x="637.5" y="557.5" width="5" height="32" fill="none" stroke="#ff0000"/>
<rect x="644.5" y="554.5" width="5" height="35" fill="none" stroke="#ff0000"/>
<rect x="651.5" y="551.5" width="5" height="38" fill="none" stroke="#ff0000"/>
<rect x="658" y="553" width="6" height="37" fill="#008000"/>
<rect x="665" y="554" width="6" height="36" fill="#008000"/>
<rect x="672.5" y="555.5" width="5" height="34" fill="none" stroke="#ff0000"/>
<rect x="679" y="555" width="6" height="35" fill="#008000"/>
<rect x="686" y="554" width="6" height="36" fill="#008000"/>
<rect x="693.5" y="564.5" width="5" height="25" fill="none" stroke="#ff0000"/>
<rect x="700" y="563" width="6" height="27" fill="#008000"/>
<rect x="707.5" y="567.5" width="5" height="22" fill="none" stroke="#ff0000"/>
<rect x="714.5" y="562.5" width="5" height="27" fill="none" stroke="#ff0000"/>
<rect x="721.5" y="548.5" width="5" height="41" fill="none" stroke="#ff0000"/>
<rect x="728.5" y="544.5" width="5" height="45" fill="none" stroke="#ff0000"/>
<rect x="735.5" y="547.5" width="5" height="42" fill="none" stroke="#ff0000"/>
<rect x="742.5" y="544.5" width="5" height="45" fill="none" stroke="#ff0000"/>
<rect x="749" y="547" width="6" height="43" fill="#008000"/>
<rect x="756" y="549" width="6" height="41" fill="#008000"/>
<rect x="763" y="542" width="6" height="48" fill="#008000"/>
<rect x="770.5" y="548.5" width="5" height="41" fill="none" stroke="#ff0000"/>
<rect x="777.5" y="543.5" width="5" height="46" fill="none" stroke="#ff0000"/>
<rect x="784" y="524" width="6" height="66" fill="#008000"/>
<rect x="791.5" y="544.5" width="5" height="45" fill="none" stroke="#ff0000"/>
<rect x="798.5" y="549.5" width="5" height="40" fill="none" stroke="#ff0000"/>
<rect x="805.5" y="552.5" width="5" height="37" fill="none" stroke="#ff0000"/>
<rect x="812" y="552" width="6" height="38" fill="#008000"/>
<rect x="819.5" y="556.5" width="5" height="33" fill="none" stroke="#ff0000"/>
<rect x="826.5" y="541.5" width="5" height="48" fill="none" stroke="#ff0000"/>
<rect x="833" y="541" width="6" height="49" fill="#008000"/>
<rect x="840.5" y="552.5" width="5" height="37" fill="none" stroke="#ff0000"/>
<rect x="847.5" y="546.5" width="5" height="43" fill="none" stroke="#ff0000"/>
<rect x="854.5" y="548.5" width="5" height="41" fill="none" stroke="#ff0000"/>
<rect x="861.5" y="545.5" width="5" height="44" fill="none" stroke="#ff0000"/>
<rect x="868.5" y="539.5" width="5" height="50" fill="none" stroke="#ff0000"/>
<rect x="875" y="541" width="6" height="49" fill="#008000"/>
<rect x="882" y="546" width="6" height="44" fill="#008000"/>
<rect x="889" y="547" width="6" height="43" fill="#008000"/>
<rect x="896.5" y="546.5" width="5" height="43" fill="none" stroke="#ff0000"/>
<rect x="903" y="536" width="6" height="54" fill="#008000"/>
<rect x="910" y="544" width="6" height="46" fill="#008000"/>
<rect x="917.5" y="555.5" width="5" height="34" fill="none" stroke="#ff0000"/>
<rect x="924" y="553" width="6" height="37" fill="#008000"/>
<rect x="931" y="557" width="6" height="33" fill="#008000"/>
<rect x="938" y="555" width="6" height="35" fill="#008000"/>
<rect x="945" y="561" width="6" height="29" fill="#008000"/>
<rect x="952" y="562" width="6" height="28" fill="#008000"/>
<rect x="959.5" y="551.5" width="5" height="38" fill="none" stroke="#ff0000"/>
<rect x="966.5" y="532.5" width="5" height="57" fill="none" stroke="#ff0000"/>
<rect x="973.5" y="526.5" width="5" height="63" fill="none" stroke="#ff0000"/>
<rect x="0" y="590" width="1238" height="2" fill="#808080"/>
<polygon points="875,528 882,528 878.5,524" fill="#000" shape-rendering="auto"/>
<rect x="347" y="159" width="1" height="366" fill="#0000ff"/>
<rect x="490" y="159" width="1" height="366" fill="#008080"/>
<rect x="632" y="159" width="1" height="366" fill="#800080"/>
<rect x="1095" y="159" width="1" height="366" fill="#ff0000"/>
<text x="349.5" y="179.5" fill="#0000ff" font-size="12" font-family="'Liberation Serif','Noto Serif CJK SC',serif" textLength="29" lengthAdjust="spacingAndGlyphs">1.382</text>
<text x="492.5" y="179.5" fill="#008080" font-size="12" font-family="'Liberation Serif','Noto Serif CJK SC',serif" textLength="17" lengthAdjust="spacingAndGlyphs">1.5</text>
<text x="634.5" y="179.5" fill="#800080" font-size="12" font-family="'Liberation Serif','Noto Serif CJK SC',serif" textLength="29" lengthAdjust="spacingAndGlyphs">1.618</text>
<text x="1097" y="179" fill="#ff0000" font-size="12" font-family="'Liberation Serif','Noto Serif CJK SC',serif">2</text>
<text x="1153" y="171.5" fill="#0000ff" font-size="10.5" font-family="'DejaVu Sans','Noto Sans CJK SC',sans-serif" textLength="81.5" lengthAdjust="spacingAndGlyphs" stroke="#0000ff" stroke-width="0.25">133.33%(120)</text>
<text x="1167.5" y="211.5" fill="#800000" font-size="10.5" font-family="'DejaVu Sans','Noto Sans CJK SC',sans-serif" textLength="67.0" lengthAdjust="spacingAndGlyphs" stroke="#800000" stroke-width="0.25">225.0%(90)</text>
<text x="1174.5" y="244.5" fill="#ff0000" font-size="10.5" font-family="'DejaVu Sans','Noto Sans CJK SC',sans-serif" textLength="60.0" lengthAdjust="spacingAndGlyphs" stroke="#ff0000" stroke-width="0.25">200.0%(0)</text>
<text x="1174.5" y="280.5" fill="#ff0000" font-size="10.5" font-family="'DejaVu Sans','Noto Sans CJK SC',sans-serif" textLength="60.0" lengthAdjust="spacingAndGlyphs" stroke="#ff0000" stroke-width="0.25">100.0%(0)</text>
<text x="1167.5" y="344.5" fill="#800000" font-size="10.5" font-family="'DejaVu Sans','Noto Sans CJK SC',sans-serif" textLength="67.0" lengthAdjust="spacingAndGlyphs" stroke="#800000" stroke-width="0.25">125.0%(90)</text>
<text x="1174.5" y="377.5" fill="#ff0000" font-size="10.5" font-family="'DejaVu Sans','Noto Sans CJK SC',sans-serif" textLength="60.0" lengthAdjust="spacingAndGlyphs" stroke="#ff0000" stroke-width="0.25">100.0%(0)</text>
<text x="1160.5" y="389.5" fill="#808080" font-size="10.5" font-family="'DejaVu Sans','Noto Sans CJK SC',sans-serif" textLength="74.0" lengthAdjust="spacingAndGlyphs" stroke="#808080" stroke-width="0.25">66.67%(240)</text>
<text x="1167" y="443.5" fill="#800080" font-size="10.5" font-family="'DejaVu Sans','Noto Sans CJK SC',sans-serif" textLength="67.5" lengthAdjust="spacingAndGlyphs" stroke="#800080" stroke-width="0.25">50.0%(180)</text>
<text x="1174.5" y="477.5" fill="#800000" font-size="10.5" font-family="'DejaVu Sans','Noto Sans CJK SC',sans-serif" textLength="60.0" lengthAdjust="spacingAndGlyphs" stroke="#800000" stroke-width="0.25">25.0%(90)</text>
<text x="1160.5" y="498.5" fill="#0000ff" font-size="10.5" font-family="'DejaVu Sans','Noto Sans CJK SC',sans-serif" textLength="74.0" lengthAdjust="spacingAndGlyphs" stroke="#0000ff" stroke-width="0.25">33.33%(120)</text>
<polyline points="213.5,494 232,488.5" fill="none" stroke="#0000ff" stroke-dasharray="5 1" shape-rendering="auto"/>
<text x="234" y="491" fill="#0000ff" font-size="10.5" font-family="'DejaVu Sans','Noto Sans CJK SC',sans-serif" textLength="58.5" lengthAdjust="spacingAndGlyphs">1991.0601</text>
<polyline points="976,178.5 979,178.5 996,183.5" fill="none" stroke="#0000ff" shape-rendering="auto"/>
<text x="996.5" y="193.8" fill="#0000ff" font-size="10.5" font-family="'DejaVu Sans','Noto Sans CJK SC',sans-serif" textLength="59" lengthAdjust="spacingAndGlyphs">2397.2600</text>
<text x="70.5" y="371" fill="#ff0000" font-size="10.5" font-family="'DejaVu Sans','Noto Sans CJK SC',sans-serif" textLength="49" lengthAdjust="spacingAndGlyphs" stroke="#ff0000" stroke-width="0.25">点8.67%</text>
<text x="67.5" y="522" fill="#404040" font-size="12" font-family="'Liberation Serif','Noto Serif CJK SC',serif" text-anchor="end" textLength="54" lengthAdjust="spacingAndGlyphs">1951.2389</text>
<text x="67.5" y="546" fill="#404040" font-size="12" font-family="'Liberation Serif','Noto Serif CJK SC',serif" text-anchor="end" textLength="54" lengthAdjust="spacingAndGlyphs">220141170</text>
<text x="67.5" y="562" fill="#404040" font-size="12" font-family="'Liberation Serif','Noto Serif CJK SC',serif" text-anchor="end" textLength="54" lengthAdjust="spacingAndGlyphs">146760780</text>
<text x="67.5" y="578" fill="#404040" font-size="12" font-family="'Liberation Serif','Noto Serif CJK SC',serif" text-anchor="end" textLength="48" lengthAdjust="spacingAndGlyphs">73380390</text>
<text x="67.5" y="616" fill="#404040" font-size="12" font-family="'Liberation Serif','Noto Serif CJK SC',serif" text-anchor="end" textLength="36" lengthAdjust="spacingAndGlyphs">112.21</text>
<text x="67.5" y="634" fill="#404040" font-size="12" font-family="'Liberation Serif','Noto Serif CJK SC',serif" text-anchor="end" textLength="30" lengthAdjust="spacingAndGlyphs">84.16</text>
<text x="67.5" y="652" fill="#404040" font-size="12" font-family="'Liberation Serif','Noto Serif CJK SC',serif" text-anchor="end" textLength="30" lengthAdjust="spacingAndGlyphs">56.10</text>
<text x="67.5" y="670" fill="#404040" font-size="12" font-family="'Liberation Serif','Noto Serif CJK SC',serif" text-anchor="end" textLength="30" lengthAdjust="spacingAndGlyphs">28.05</text>
<text x="2" y="603.5" fill="#0000ff" font-size="12" font-family="'Liberation Serif','Noto Serif CJK SC',serif" font-weight="600">能量买卖</text>
<rect x="78" y="661" width="2" height="1" fill="#ff8080"/>
<rect x="85" y="662" width="2" height="1" fill="#008000"/>
<rect x="92.5" y="663.5" width="3" height="2" fill="none" stroke="#008000"/>
<rect x="93" y="663" width="1" height="3" fill="#008000"/>
<rect x="99.5" y="666.5" width="3" height="5" fill="none" stroke="#008000"/>
<rect x="100" y="666" width="1" height="6" fill="#008000"/>
<rect x="106.5" y="669.5" width="3" height="5" fill="none" stroke="#008000"/>
<rect x="107" y="669" width="1" height="6" fill="#008000"/>
<rect x="113.5" y="671.5" width="3" height="3" fill="none" stroke="#008000"/>
<rect x="114" y="671" width="1" height="4" fill="#008000"/>
<rect x="120" y="672" width="4" height="2" fill="#008000"/>
<rect x="127" y="672" width="2" height="1" fill="#008000"/>
<rect x="141" y="673" width="2" height="1" fill="#008000"/>
<rect x="148" y="673" width="2" height="1" fill="#008000"/>
<rect x="155" y="674" width="2" height="1" fill="#008000"/>
<rect x="162.5" y="667.5" width="3" height="3" fill="none" stroke="#ff8080"/>
<rect x="163" y="667" width="1" height="4" fill="#ff8080"/>
<rect x="169.5" y="662.5" width="3" height="5" fill="none" stroke="#ff8080"/>
<rect x="170" y="662" width="1" height="6" fill="#ff8080"/>
<rect x="176.5" y="655.5" width="3" height="8" fill="none" stroke="#ff8080"/>
<rect x="177" y="655" width="1" height="9" fill="#ff8080"/>
<rect x="183.5" y="658.5" width="3" height="3" fill="none" stroke="#ff8080"/>
<rect x="184" y="658" width="1" height="4" fill="#ff8080"/>
<rect x="190.5" y="658.5" width="3" height="2" fill="none" stroke="#ff8080"/>
<rect x="191" y="658" width="1" height="3" fill="#ff8080"/>
<rect x="197" y="662" width="4" height="2" fill="#008000"/>
<rect x="204.5" y="663.5" width="3" height="3" fill="none" stroke="#008000"/>
<rect x="205" y="663" width="1" height="4" fill="#008000"/>
<rect x="211" y="662" width="2" height="1" fill="#ff8080"/>
<rect x="218" y="660" width="4" height="2" fill="#ff8080"/>
<rect x="225.5" y="655.5" width="3" height="4" fill="none" stroke="#ff8080"/>
<rect x="226" y="655" width="1" height="5" fill="#ff8080"/>
<rect x="232.5" y="649.5" width="3" height="6" fill="none" stroke="#ff8080"/>
<rect x="233" y="649" width="1" height="7" fill="#ff8080"/>
<rect x="239.5" y="647.5" width="3" height="5" fill="none" stroke="#ff8080"/>
<rect x="240" y="647" width="1" height="6" fill="#ff8080"/>
<rect x="246.5" y="642.5" width="3" height="6" fill="none" stroke="#ff8080"/>
<rect x="247" y="642" width="1" height="7" fill="#ff8080"/>
<rect x="253.5" y="641.5" width="3" height="4" fill="none" stroke="#ff8080"/>
<rect x="254" y="641" width="1" height="5" fill="#ff8080"/>
<rect x="260.5" y="640.5" width="3" height="3" fill="none" stroke="#ff8080"/>
<rect x="261" y="640" width="1" height="4" fill="#ff8080"/>
<rect x="267.5" y="640.5" width="3" height="2" fill="none" stroke="#ff8080"/>
<rect x="268" y="640" width="1" height="3" fill="#ff8080"/>
<rect x="274" y="643" width="2" height="1" fill="#008000"/>
<rect x="281" y="641" width="4" height="2" fill="#ff8080"/>
<rect x="295" y="643" width="2" height="1" fill="#008000"/>
<rect x="302.5" y="637.5" width="3" height="3" fill="none" stroke="#ff8080"/>
<rect x="303" y="637" width="1" height="4" fill="#ff8080"/>
<rect x="309.5" y="632.5" width="3" height="5" fill="none" stroke="#ff8080"/>
<rect x="310" y="632" width="1" height="6" fill="#ff8080"/>
<rect x="316.5" y="631.5" width="3" height="4" fill="none" stroke="#ff8080"/>
<rect x="317" y="631" width="1" height="5" fill="#ff8080"/>
<rect x="323.5" y="628.5" width="3" height="4" fill="none" stroke="#ff8080"/>
<rect x="324" y="628" width="1" height="5" fill="#ff8080"/>
<rect x="330.5" y="626.5" width="3" height="4" fill="none" stroke="#ff8080"/>
<rect x="331" y="626" width="1" height="5" fill="#ff8080"/>
<rect x="344.5" y="632.5" width="3" height="3" fill="none" stroke="#008000"/>
<rect x="345" y="632" width="1" height="4" fill="#008000"/>
<rect x="351.5" y="638.5" width="3" height="10" fill="none" stroke="#008000"/>
<rect x="352" y="638" width="1" height="11" fill="#008000"/>
<rect x="358.5" y="644.5" width="3" height="11" fill="none" stroke="#008000"/>
<rect x="359" y="644" width="1" height="12" fill="#008000"/>
<rect x="365.5" y="650.5" width="3" height="10" fill="none" stroke="#008000"/>
<rect x="366" y="650" width="1" height="11" fill="#008000"/>
<rect x="372.5" y="654.5" width="3" height="7" fill="none" stroke="#008000"/>
<rect x="373" y="654" width="1" height="8" fill="#008000"/>
<rect x="379.5" y="658.5" width="3" height="6" fill="none" stroke="#008000"/>
<rect x="380" y="658" width="1" height="7" fill="#008000"/>
<rect x="386.5" y="660.5" width="3" height="3" fill="none" stroke="#008000"/>
<rect x="387" y="660" width="1" height="4" fill="#008000"/>
<rect x="393" y="661" width="4" height="2" fill="#008000"/>
<rect x="400" y="660" width="2" height="1" fill="#ff8080"/>
<rect x="407" y="657" width="4" height="2" fill="#ff8080"/>
<rect x="414.5" y="652.5" width="3" height="4" fill="none" stroke="#ff8080"/>
<rect x="415" y="652" width="1" height="5" fill="#ff8080"/>
<rect x="421.5" y="648.5" width="3" height="5" fill="none" stroke="#ff8080"/>
<rect x="422" y="648" width="1" height="6" fill="#ff8080"/>
<rect x="428.5" y="646.5" width="3" height="4" fill="none" stroke="#ff8080"/>
<rect x="429" y="646" width="1" height="5" fill="#ff8080"/>
<rect x="435.5" y="644.5" width="3" height="4" fill="none" stroke="#ff8080"/>
<rect x="436" y="644" width="1" height="5" fill="#ff8080"/>
<rect x="442.5" y="637.5" width="3" height="7" fill="none" stroke="#ff8080"/>
<rect x="443" y="637" width="1" height="8" fill="#ff8080"/>
<rect x="449" y="642" width="4" height="2" fill="#ff8080"/>
<rect x="456" y="644" width="2" height="1" fill="#008000"/>
<rect x="463" y="645" width="2" height="1" fill="#008000"/>
<rect x="470.5" y="637.5" width="3" height="4" fill="none" stroke="#ff8080"/>
<rect x="471" y="637" width="1" height="5" fill="#ff8080"/>
<rect x="477.5" y="631.5" width="3" height="7" fill="none" stroke="#ff8080"/>
<rect x="478" y="631" width="1" height="8" fill="#ff8080"/>
<rect x="484.5" y="631.5" width="3" height="4" fill="none" stroke="#ff8080"/>
<rect x="485" y="631" width="1" height="5" fill="#ff8080"/>
<rect x="498" y="637" width="4" height="2" fill="#008000"/>
<rect x="505.5" y="639.5" width="3" height="3" fill="none" stroke="#008000"/>
<rect x="506" y="639" width="1" height="4" fill="#008000"/>
<rect x="512" y="637" width="2" height="1" fill="#ff8080"/>
<rect x="519" y="635" width="4" height="2" fill="#ff8080"/>
<rect x="526.5" y="631.5" width="3" height="3" fill="none" stroke="#ff8080"/>
<rect x="527" y="631" width="1" height="4" fill="#ff8080"/>
<rect x="533.5" y="627.5" width="3" height="4" fill="none" stroke="#ff8080"/>
<rect x="534" y="627" width="1" height="5" fill="#ff8080"/>
<rect x="540.5" y="625.5" width="3" height="4" fill="none" stroke="#ff8080"/>
<rect x="541" y="625" width="1" height="5" fill="#ff8080"/>
<rect x="547.5" y="625.5" width="3" height="2" fill="none" stroke="#ff8080"/>
<rect x="548" y="625" width="1" height="3" fill="#ff8080"/>
<rect x="554" y="625" width="4" height="2" fill="#ff8080"/>
<rect x="561.5" y="623.5" width="3" height="2" fill="none" stroke="#ff8080"/>
<rect x="562" y="623" width="1" height="3" fill="#ff8080"/>
<rect x="575" y="624" width="2" height="1" fill="#ff8080"/>
<rect x="582" y="624" width="2" height="1" fill="#ff8080"/>
<rect x="589" y="623" width="4" height="1" fill="#ff8080"/>
<rect x="596" y="625" width="4" height="2" fill="#008000"/>
<rect x="603" y="626" width="4" height="2" fill="#008000"/>
<rect x="617" y="625" width="2" height="1" fill="#ff8080"/>
<rect x="624" y="624" width="2" height="1" fill="#ff8080"/>
<rect x="631" y="626" width="2" height="1" fill="#008000"/>
<rect x="638" y="625" width="2" height="1" fill="#008000"/>
<rect x="645" y="624" width="2" height="1" fill="#ff8080"/>
<rect x="652" y="623" width="4" height="2" fill="#ff8080"/>
<rect x="659" y="624" width="4" height="1" fill="#ff8080"/>
<rect x="666.5" y="626.5" width="3" height="2" fill="none" stroke="#008000"/>
<rect x="667" y="626" width="1" height="3" fill="#008000"/>
<rect x="673" y="627" width="2" height="1" fill="#008000"/>
<rect x="680.5" y="628.5" width="3" height="3" fill="none" stroke="#008000"/>
<rect x="681" y="628" width="1" height="4" fill="#008000"/>
<rect x="687.5" y="632.5" width="3" height="8" fill="none" stroke="#008000"/>
<rect x="688" y="632" width="1" height="9" fill="#008000"/>
<rect x="694.5" y="637.5" width="3" height="8" fill="none" stroke="#008000"/>
<rect x="695" y="637" width="1" height="9" fill="#008000"/>
<rect x="701.5" y="643.5" width="3" height="10" fill="none" stroke="#008000"/>
<rect x="702" y="643" width="1" height="11" fill="#008000"/>
<rect x="708.5" y="647.5" width="3" height="7" fill="none" stroke="#008000"/>
<rect x="709" y="647" width="1" height="8" fill="#008000"/>
<rect x="715" y="647" width="2" height="1" fill="#008000"/>
<rect x="722.5" y="639.5" width="3" height="5" fill="none" stroke="#ff8080"/>
<rect x="723" y="639" width="1" height="6" fill="#ff8080"/>
<rect x="729.5" y="633.5" width="3" height="7" fill="none" stroke="#ff8080"/>
<rect x="730" y="633" width="1" height="8" fill="#ff8080"/>
<rect x="736.5" y="629.5" width="3" height="7" fill="none" stroke="#ff8080"/>
<rect x="737" y="629" width="1" height="8" fill="#ff8080"/>
<rect x="743.5" y="626.5" width="3" height="6" fill="none" stroke="#ff8080"/>
<rect x="744" y="626" width="1" height="7" fill="#ff8080"/>
<rect x="750.5" y="625.5" width="3" height="4" fill="none" stroke="#ff8080"/>
<rect x="751" y="625" width="1" height="5" fill="#ff8080"/>
<rect x="757.5" y="625.5" width="3" height="3" fill="none" stroke="#ff8080"/>
<rect x="758" y="625" width="1" height="4" fill="#ff8080"/>
<rect x="771" y="627" width="2" height="1" fill="#ff8080"/>
<rect x="778" y="625" width="4" height="2" fill="#ff8080"/>
<rect x="785.5" y="628.5" width="3" height="2" fill="none" stroke="#008000"/>
<rect x="786" y="628" width="1" height="3" fill="#008000"/>
<rect x="792" y="630" width="4" height="2" fill="#008000"/>
<rect x="799" y="631" width="4" height="2" fill="#008000"/>
<rect x="813.5" y="633.5" width="3" height="3" fill="none" stroke="#008000"/>
<rect x="814" y="633" width="1" height="4" fill="#008000"/>
<rect x="820.5" y="635.5" width="3" height="2" fill="none" stroke="#008000"/>
<rect x="821" y="635" width="1" height="3" fill="#008000"/>
<rect x="827" y="633" width="2" height="1" fill="#ff8080"/>
<rect x="848" y="631" width="4" height="2" fill="#ff8080"/>
<rect x="855.5" y="628.5" width="3" height="2" fill="none" stroke="#ff8080"/>
<rect x="856" y="628" width="1" height="3" fill="#ff8080"/>
<rect x="862.5" y="625.5" width="3" height="3" fill="none" stroke="#ff8080"/>
<rect x="863" y="625" width="1" height="4" fill="#ff8080"/>
<rect x="869.5" y="624.5" width="3" height="2" fill="none" stroke="#ff8080"/>
<rect x="870" y="624" width="1" height="3" fill="#ff8080"/>
<rect x="876" y="626" width="2" height="1" fill="#ff8080"/>
<rect x="883" y="627" width="4" height="2" fill="#008000"/>
<rect x="890.5" y="629.5" width="3" height="2" fill="none" stroke="#008000"/>
<rect x="891" y="629" width="1" height="3" fill="#008000"/>
<rect x="897" y="630" width="4" height="2" fill="#008000"/>
<rect x="904.5" y="631.5" width="3" height="3" fill="none" stroke="#008000"/>
<rect x="905" y="631" width="1" height="4" fill="#008000"/>
<rect x="911.5" y="634.5" width="3" height="5" fill="none" stroke="#008000"/>
<rect x="912" y="634" width="1" height="6" fill="#008000"/>
<rect x="918.5" y="636.5" width="3" height="3" fill="none" stroke="#008000"/>
<rect x="919" y="636" width="1" height="4" fill="#008000"/>
<rect x="925.5" y="639.5" width="3" height="5" fill="none" stroke="#008000"/>
<rect x="926" y="639" width="1" height="6" fill="#008000"/>
<rect x="932.5" y="644.5" width="3" height="9" fill="none" stroke="#008000"/>
<rect x="933" y="644" width="1" height="10" fill="#008000"/>
<rect x="939.5" y="651.5" width="3" height="11" fill="none" stroke="#008000"/>
<rect x="940" y="651" width="1" height="12" fill="#008000"/>
<rect x="946.5" y="657.5" width="3" height="11" fill="none" stroke="#008000"/>
<rect x="947" y="657" width="1" height="12" fill="#008000"/>
<rect x="953.5" y="662.5" width="3" height="9" fill="none" stroke="#008000"/>
<rect x="954" y="662" width="1" height="10" fill="#008000"/>
<rect x="960" y="663" width="3" height="2" fill="#008000"/>
<rect x="967.5" y="653.5" width="3" height="6" fill="none" stroke="#ff8080"/>
<rect x="968" y="653" width="1" height="7" fill="#ff8080"/>
<rect x="974.5" y="643.5" width="3" height="10" fill="none" stroke="#ff8080"/>
<rect x="975" y="643" width="1" height="11" fill="#ff8080"/>
<rect x="981.5" y="637.5" width="3" height="10" fill="none" stroke="#ff8080"/>
<rect x="982" y="637" width="1" height="11" fill="#ff8080"/>
<rect x="988.5" y="632.5" width="3" height="10" fill="none" stroke="#ff8080"/>
<rect x="989" y="632" width="1" height="11" fill="#ff8080"/>
<rect x="995.5" y="629.5" width="3" height="8" fill="none" stroke="#ff8080"/>
<rect x="996" y="629" width="1" height="9" fill="#ff8080"/>
<rect x="1002.5" y="627.5" width="3" height="7" fill="none" stroke="#ff8080"/>
<rect x="1003" y="627" width="1" height="8" fill="#ff8080"/>
<rect x="1009.5" y="626.5" width="3" height="5" fill="none" stroke="#ff8080"/>
<rect x="1010" y="626" width="1" height="6" fill="#ff8080"/>
<rect x="1016.5" y="625.5" width="3" height="3" fill="none" stroke="#ff8080"/>
<rect x="1017" y="625" width="1" height="4" fill="#ff8080"/>
<rect x="1023.5" y="624.5" width="3" height="3" fill="none" stroke="#ff8080"/>
<rect x="1024" y="624" width="1" height="4" fill="#ff8080"/>
<rect x="1030.5" y="624.5" width="3" height="2" fill="none" stroke="#ff8080"/>
<rect x="1031" y="624" width="1" height="3" fill="#ff8080"/>
<rect x="1037" y="624" width="4" height="2" fill="#ff8080"/>
<rect x="1044" y="624" width="2" height="1" fill="#ff8080"/>
<rect x="1051" y="623" width="2" height="1" fill="#ff8080"/>
<rect x="1065" y="624" width="2" height="1" fill="#008000"/>
<rect x="1079.5" y="629.5" width="3" height="5" fill="none" stroke="#008000"/>
<rect x="1080" y="629" width="1" height="6" fill="#008000"/>
<rect x="1086.5" y="633.5" width="3" height="7" fill="none" stroke="#008000"/>
<rect x="1087" y="633" width="1" height="8" fill="#008000"/>
<rect x="1093.5" y="637.5" width="3" height="7" fill="none" stroke="#008000"/>
<rect x="1094" y="637" width="1" height="8" fill="#008000"/>
<rect x="1100.5" y="640.5" width="3" height="6" fill="none" stroke="#008000"/>
<rect x="1101" y="640" width="1" height="7" fill="#008000"/>
<rect x="1107.5" y="643.5" width="3" height="5" fill="none" stroke="#008000"/>
<rect x="1108" y="643" width="1" height="6" fill="#008000"/>
<rect x="1114.5" y="645.5" width="3" height="4" fill="none" stroke="#008000"/>
<rect x="1115" y="645" width="1" height="5" fill="#008000"/>
<rect x="1121.5" y="647.5" width="3" height="2" fill="none" stroke="#008000"/>
<rect x="1122" y="647" width="1" height="3" fill="#008000"/>
<rect x="1128.5" y="648.5" width="3" height="2" fill="none" stroke="#008000"/>
<rect x="1129" y="648" width="1" height="3" fill="#008000"/>
<rect x="1135" y="649" width="4" height="2" fill="#008000"/>
<rect x="1142" y="650" width="2" height="1" fill="#008000"/>
<rect x="1149" y="651" width="2" height="1" fill="#008000"/>
<rect x="1156" y="651" width="2" height="1" fill="#008000"/>
<rect x="1163" y="651" width="2" height="1" fill="#008000"/>
<rect x="1170" y="651" width="2" height="1" fill="#008000"/>
<text x="346.5" y="625" fill="#008000" font-size="12" font-family="'Liberation Serif','Noto Serif CJK SC',serif" font-weight="600">卖</text>
<text x="570.5" y="625" fill="#008000" font-size="12" font-family="'Liberation Serif','Noto Serif CJK SC',serif" font-weight="600">卖</text>
<text x="598.5" y="625" fill="#008000" font-size="12" font-family="'Liberation Serif','Noto Serif CJK SC',serif" font-weight="600">卖</text>
<text x="633.5" y="625" fill="#008000" font-size="12" font-family="'Liberation Serif','Noto Serif CJK SC',serif" font-weight="600">卖</text>
<text x="668.5" y="625" fill="#008000" font-size="12" font-family="'Liberation Serif','Noto Serif CJK SC',serif" font-weight="600">卖</text>
<text x="787.5" y="625" fill="#008000" font-size="12" font-family="'Liberation Serif','Noto Serif CJK SC',serif" font-weight="600">卖</text>
<text x="885.5" y="625" fill="#008000" font-size="12" font-family="'Liberation Serif','Noto Serif CJK SC',serif" font-weight="600">卖</text>
<text x="1067.5" y="625" fill="#008000" font-size="12" font-family="'Liberation Serif','Noto Serif CJK SC',serif" font-weight="600">卖</text>
</svg>
<svg width="1238" height="130" viewBox="0 0 1238 130" style="position:absolute;left:0;top:0">
<rect x="4" y="52" width="1" height="20" fill="#fff" shape-rendering="crispEdges"/>
<rect x="5" y="52" width="1" height="21" fill="#a0a0a0" shape-rendering="crispEdges"/>
<rect x="4" y="72" width="1" height="1" fill="#a0a0a0" shape-rendering="crispEdges"/>
<rect x="11" y="55" width="16" height="13" fill="#000" shape-rendering="crispEdges"/>
<rect x="12" y="57" width="14" height="10" fill="#fff" shape-rendering="crispEdges"/>
<rect x="12" y="55" width="14" height="2" fill="#0000c0" shape-rendering="crispEdges"/>
<rect x="12" y="55" width="2" height="1" fill="#fff" shape-rendering="crispEdges"/>
<rect x="24" y="55" width="2" height="1" fill="#fff" shape-rendering="crispEdges"/>
<rect x="13" y="59" width="2" height="1" fill="#000" shape-rendering="crispEdges"/>
<rect x="16" y="59" width="2" height="1" fill="#000" shape-rendering="crispEdges"/>
<rect x="19" y="59" width="2" height="1" fill="#000" shape-rendering="crispEdges"/>
<rect x="22" y="59" width="2" height="1" fill="#000" shape-rendering="crispEdges"/>
<rect x="24" y="59" width="1" height="1" fill="#000" shape-rendering="crispEdges"/>
<rect x="13" y="61" width="2" height="1" fill="#000" shape-rendering="crispEdges"/>
<rect x="16" y="61" width="2" height="1" fill="#000" shape-rendering="crispEdges"/>
<rect x="19" y="61" width="2" height="1" fill="#000" shape-rendering="crispEdges"/>
<rect x="22" y="61" width="2" height="1" fill="#000" shape-rendering="crispEdges"/>
<rect x="24" y="61" width="1" height="1" fill="#000" shape-rendering="crispEdges"/>
<rect x="13" y="63" width="2" height="1" fill="#000" shape-rendering="crispEdges"/>
<rect x="16" y="63" width="2" height="1" fill="#000" shape-rendering="crispEdges"/>
<rect x="19" y="63" width="2" height="1" fill="#000" shape-rendering="crispEdges"/>
<rect x="22" y="63" width="2" height="1" fill="#000" shape-rendering="crispEdges"/>
<rect x="24" y="63" width="1" height="1" fill="#000" shape-rendering="crispEdges"/>
<rect x="13" y="65" width="2" height="1" fill="#000" shape-rendering="crispEdges"/>
<rect x="16" y="65" width="2" height="1" fill="#000" shape-rendering="crispEdges"/>
<rect x="19" y="65" width="2" height="1" fill="#000" shape-rendering="crispEdges"/>
<rect x="22" y="65" width="2" height="1" fill="#000" shape-rendering="crispEdges"/>
<rect x="24" y="65" width="1" height="1" fill="#000" shape-rendering="crispEdges"/>
<rect x="64" y="54" width="16" height="16" fill="#000" shape-rendering="crispEdges"/>
<rect x="64.5" y="54.5" width="7" height="7" fill="#008080" stroke="#00ffff" stroke-dasharray="1 1" shape-rendering="crispEdges"/>
<rect x="72.5" y="62.5" width="7" height="7" fill="#008080" stroke="#00ffff" stroke-dasharray="1 1" shape-rendering="crispEdges"/>
<rect x="74" y="55" width="5" height="5" fill="#00ffff" shape-rendering="crispEdges"/>
<rect x="65" y="64" width="5" height="5" fill="#00ffff" shape-rendering="crispEdges"/>
<rect x="71" y="57" width="3" height="3" fill="#00c0c0" shape-rendering="crispEdges"/>
<rect x="70" y="62" width="3" height="2" fill="#00c0c0" shape-rendering="crispEdges"/>
<rect x="118" y="62" width="1" height="9" fill="#ff0000" shape-rendering="crispEdges"/>
<rect x="117.5" y="64.5" width="2" height="3" fill="#f0f0f0" stroke="#ff0000" stroke-width="1" shape-rendering="crispEdges"/>
<rect x="122" y="58" width="1" height="10" fill="#ff0000" shape-rendering="crispEdges"/>
<rect x="121.5" y="60.5" width="2" height="4" fill="#f0f0f0" stroke="#ff0000" stroke-width="1" shape-rendering="crispEdges"/>
<rect x="126" y="58" width="1" height="8" fill="#008000" shape-rendering="crispEdges"/>
<rect x="125.5" y="60.5" width="2" height="3" fill="#f0f0f0" stroke="#008000" stroke-width="1" shape-rendering="crispEdges"/>
<rect x="130" y="54" width="1" height="10" fill="#ff0000" shape-rendering="crispEdges"/>
<rect x="129.5" y="56.5" width="2" height="4" fill="#f0f0f0" stroke="#ff0000" stroke-width="1" shape-rendering="crispEdges"/>
<rect x="126" y="60" width="1" height="3" fill="#008000" shape-rendering="crispEdges"/>
<rect x="167" y="55" width="13" height="13" fill="#f8f8f8" shape-rendering="crispEdges"/>
<rect x="167.5" y="55.5" width="12" height="12" fill="none" stroke="#ff0000" stroke-width="1" shape-rendering="crispEdges"/>
<rect x="167.5" y="55.5" width="12" height="12" fill="none" stroke="#400000" stroke-opacity="0.55" stroke-width="1" stroke-dasharray="1 2" shape-rendering="crispEdges"/>
<text x="173.6" y="65.2" fill="#000" stroke="#000" stroke-width="0.3" font-size="8.5" font-family="'Liberation Sans',sans-serif" textLength="9.6" lengthAdjust="spacingAndGlyphs" text-anchor="middle">PS</text>
<rect x="239" y="55" width="13" height="13" fill="#f8f8f8" shape-rendering="crispEdges"/>
<rect x="239.5" y="55.5" width="12" height="12" fill="none" stroke="#ff00ff" stroke-width="1" shape-rendering="crispEdges"/>
<rect x="239.5" y="55.5" width="12" height="12" fill="none" stroke="#400000" stroke-opacity="0.55" stroke-width="1" stroke-dasharray="1 2" shape-rendering="crispEdges"/>
<text x="245.6" y="65.2" fill="#800000" stroke="#800000" stroke-width="0.3" font-size="8.5" font-family="'Liberation Sans',sans-serif" textLength="9.6" lengthAdjust="spacingAndGlyphs" text-anchor="middle">P9</text>
<rect x="318" y="55" width="13" height="13" fill="#f8f8f8" shape-rendering="crispEdges"/>
<rect x="318.5" y="55.5" width="12" height="12" fill="none" stroke="#ff0000" stroke-width="1" shape-rendering="crispEdges"/>
<rect x="318.5" y="55.5" width="12" height="12" fill="none" stroke="#400000" stroke-opacity="0.55" stroke-width="1" stroke-dasharray="1 2" shape-rendering="crispEdges"/>
<text x="324.6" y="65.2" fill="#000" stroke="#000" stroke-width="0.3" font-size="8.5" font-family="'Liberation Sans',sans-serif" textLength="9.6" lengthAdjust="spacingAndGlyphs" text-anchor="middle">PN</text>
<rect x="390" y="55" width="13" height="13" fill="#f8f8f8" shape-rendering="crispEdges"/>
<rect x="390.5" y="55.5" width="12" height="12" fill="none" stroke="#00c000" stroke-width="1" shape-rendering="crispEdges"/>
<rect x="390.5" y="55.5" width="12" height="12" fill="none" stroke="#400000" stroke-opacity="0.55" stroke-width="1" stroke-dasharray="1 2" shape-rendering="crispEdges"/>
<text x="396.6" y="65.2" fill="#800000" stroke="#800000" stroke-width="0.3" font-size="8.5" font-family="'Liberation Sans',sans-serif" textLength="9.6" lengthAdjust="spacingAndGlyphs" text-anchor="middle">TS</text>
<rect x="462" y="55" width="13" height="13" fill="#f8f8f8" shape-rendering="crispEdges"/>
<rect x="462.5" y="55.5" width="12" height="12" fill="none" stroke="#00d0d0" stroke-width="1" shape-rendering="crispEdges"/>
<rect x="462.5" y="55.5" width="12" height="12" fill="none" stroke="#400000" stroke-opacity="0.55" stroke-width="1" stroke-dasharray="1 2" shape-rendering="crispEdges"/>
<text x="468.6" y="65.2" fill="#800000" stroke="#800000" stroke-width="0.3" font-size="8.5" font-family="'Liberation Sans',sans-serif" textLength="9.6" lengthAdjust="spacingAndGlyphs" text-anchor="middle">T9</text>
<rect x="541" y="55" width="13" height="13" fill="#f8f8f8" shape-rendering="crispEdges"/>
<rect x="541.5" y="55.5" width="12" height="12" fill="none" stroke="#00c000" stroke-width="1" shape-rendering="crispEdges"/>
<rect x="541.5" y="55.5" width="12" height="12" fill="none" stroke="#400000" stroke-opacity="0.55" stroke-width="1" stroke-dasharray="1 2" shape-rendering="crispEdges"/>
<text x="547.6" y="65.2" fill="#800000" stroke="#800000" stroke-width="0.3" font-size="8.5" font-family="'Liberation Sans',sans-serif" textLength="9.6" lengthAdjust="spacingAndGlyphs" text-anchor="middle">TN</text>
<circle cx="619.5" cy="61.5" r="6.8" fill="#fff" stroke="#800020" stroke-width="2"/>
<circle cx="619.5" cy="61.5" r="3.2" fill="#fff" stroke="#006030" stroke-width="2"/>
<circle cx="619.5" cy="61.5" r="1" fill="#ff6060" stroke="#ff6060" stroke-width="1"/>
<line x1="613" y1="61.5" x2="626" y2="61.5" stroke="#808080" stroke-width="1"/>
<line x1="619.5" y1="55" x2="619.5" y2="68" stroke="#808080" stroke-width="1"/>
<circle cx="684.5" cy="61.5" r="7" fill="#fff" stroke="#205080" stroke-width="1.4"/>
<text x="684.5" y="65" fill="#208020" font-size="9" font-weight="bold" font-family="'Liberation Sans','Noto Sans CJK SC',sans-serif" textLength="11" lengthAdjust="spacingAndGlyphs" text-anchor="middle">Big</text>
<polygon points="742,62 746,55.5 754,55.5 758,62 754,68.5 746,68.5" fill="#fff" stroke="#c00020" stroke-width="1.5"/>
<circle cx="750" cy="62" r="3.6" fill="#fff" stroke="#0000c0" stroke-width="2"/>
<circle cx="750" cy="62" r="1.2" fill="#fff" stroke="#008040" stroke-width="1.2"/>
<text x="815" y="69" fill="#70c070" font-size="18" font-weight="bold" font-family="'Liberation Sans','Noto Sans CJK SC',sans-serif" text-anchor="middle">$</text>
<rect x="4" y="79" width="1" height="19" fill="#fff" shape-rendering="crispEdges"/>
<rect x="5" y="79" width="1" height="20" fill="#a0a0a0" shape-rendering="crispEdges"/>
<rect x="4" y="98" width="1" height="1" fill="#a0a0a0" shape-rendering="crispEdges"/>
<rect x="15.0" y="84.0" width="7" height="10" fill="none" stroke="#000" stroke-width="2" shape-rendering="crispEdges"/>
<rect x="14" y="88" width="9" height="2" fill="#000" shape-rendering="crispEdges"/>
<rect x="22" y="83" width="2" height="1" fill="#000" shape-rendering="crispEdges"/>
<polygon points="30,88 35,88 32.5,91" fill="#000" stroke="none" stroke-width="1"/>
<rect x="39" y="78" width="23" height="21" fill="#f8f8f8" shape-rendering="crispEdges"/>
<rect x="39" y="78" width="23" height="1" fill="#a0a0a0" shape-rendering="crispEdges"/>
<rect x="39" y="78" width="1" height="21" fill="#a0a0a0" shape-rendering="crispEdges"/>
<rect x="39" y="98" width="23" height="1" fill="#fff" shape-rendering="crispEdges"/>
<rect x="61" y="78" width="1" height="21" fill="#fff" shape-rendering="crispEdges"/>
<path d="M44.5 84.5 H48.5 L49.5 83.5 H52.5 L53.5 84.5 H57.5 V86.5 L56.5 87.5 L57.5 88.5 V90.5 L56.5 91.5 L57.5 92.5 V94.5 L56.5 95.5 H54.5 L53.5 94.5 H51.5 L50.5 93.5 L49.5 94.5 H47.5 L46.5 95.5 H45.5 L44.5 94.5 V93.5 L45.5 92.5 L44.5 89.5 L45.5 87.5 L44.5 86.5 Z" fill="none" stroke="#0000ff" stroke-width="1" shape-rendering="crispEdges"/>
<path d="M46.5 91.5 L45.5 89.5 L47.5 86.5 H49.5 L50.5 87.5 L52.5 86.5 H54.5 L56.5 88.5 M48.5 91.5 L47.5 90.5 V89.5 L48.5 88.5 H50.5 V89.5 L52.5 88.5 L54.5 89.5 V91.5 L56.5 92.5" fill="none" stroke="#0000ff" stroke-width="1" shape-rendering="crispEdges"/>
<rect x="71" y="82" width="3" height="1" fill="#0000ff" shape-rendering="crispEdges"/>
<rect x="68" y="83" width="3" height="1" fill="#0000ff" shape-rendering="crispEdges"/>
<rect x="74" y="83" width="3" height="1" fill="#0000ff" shape-rendering="crispEdges"/>
<rect x="67" y="84" width="1" height="10" fill="#0000ff" shape-rendering="crispEdges"/>
<rect x="77" y="84" width="1" height="10" fill="#0000ff" shape-rendering="crispEdges"/>
<rect x="68" y="94" width="9" height="1" fill="#0000ff" shape-rendering="crispEdges"/>
<rect x="70" y="86" width="4" height="1" fill="#0000ff" shape-rendering="crispEdges"/>
<rect x="70" y="89" width="4" height="1" fill="#0000ff" shape-rendering="crispEdges"/>
<rect x="70" y="91" width="4" height="1" fill="#0000ff" shape-rendering="crispEdges"/>
<rect x="89" y="91" width="1" height="5" fill="#800080" shape-rendering="crispEdges"/>
<rect x="92" y="91" width="1" height="4" fill="#800080" shape-rendering="crispEdges"/>
<rect x="95" y="87" width="1" height="8" fill="#800080" shape-rendering="crispEdges"/>
<rect x="97" y="82" width="1" height="6" fill="#800080" shape-rendering="crispEdges"/>
<rect x="100" y="82" width="1" height="7" fill="#800080" shape-rendering="crispEdges"/>
<rect x="102" y="84" width="1" height="5" fill="#800080" shape-rendering="crispEdges"/>
<rect x="89" y="91" width="4" height="1" fill="#800080" shape-rendering="crispEdges"/>
<rect x="92" y="94" width="4" height="1" fill="#800080" shape-rendering="crispEdges"/>
<rect x="95" y="87" width="3" height="1" fill="#800080" shape-rendering="crispEdges"/>
<rect x="97" y="82" width="4" height="1" fill="#800080" shape-rendering="crispEdges"/>
<rect x="100" y="88" width="3" height="1" fill="#800080" shape-rendering="crispEdges"/>
<text x="98.7" y="97" fill="#000" font-size="6.5" font-weight="bold" font-family="'Liberation Sans','Noto Sans CJK SC',sans-serif">3</text>
<rect x="112" y="91" width="1" height="5" fill="#800000" shape-rendering="crispEdges"/>
<rect x="115" y="91" width="1" height="4" fill="#800000" shape-rendering="crispEdges"/>
<rect x="118" y="87" width="1" height="8" fill="#800000" shape-rendering="crispEdges"/>
<rect x="120" y="82" width="1" height="6" fill="#800000" shape-rendering="crispEdges"/>
<rect x="123" y="82" width="1" height="7" fill="#800000" shape-rendering="crispEdges"/>
<rect x="125" y="84" width="1" height="5" fill="#800000" shape-rendering="crispEdges"/>
<rect x="112" y="91" width="4" height="1" fill="#800000" shape-rendering="crispEdges"/>
<rect x="115" y="94" width="4" height="1" fill="#800000" shape-rendering="crispEdges"/>
<rect x="118" y="87" width="3" height="1" fill="#800000" shape-rendering="crispEdges"/>
<rect x="120" y="82" width="4" height="1" fill="#800000" shape-rendering="crispEdges"/>
<rect x="123" y="88" width="3" height="1" fill="#800000" shape-rendering="crispEdges"/>
<text x="121.7" y="97" fill="#000" font-size="6.5" font-weight="bold" font-family="'Liberation Sans','Noto Sans CJK SC',sans-serif">9</text>
<rect x="141" y="82" width="1" height="15" fill="#000" shape-rendering="crispEdges"/>
<rect x="139.3" y="84.5" width="4.6" height="9" fill="#f0f0f0" stroke="#000" stroke-width="1.4"/>
<polygon points="153,88 158,88 155.5,91" fill="#000" stroke="none" stroke-width="1"/>
<rect x="162" y="78" width="23" height="21" fill="#f8f8f8" shape-rendering="crispEdges"/>
<rect x="162" y="78" width="23" height="1" fill="#a0a0a0" shape-rendering="crispEdges"/>
<rect x="162" y="78" width="1" height="21" fill="#a0a0a0" shape-rendering="crispEdges"/>
<rect x="162" y="98" width="23" height="1" fill="#fff" shape-rendering="crispEdges"/>
<rect x="184" y="78" width="1" height="21" fill="#fff" shape-rendering="crispEdges"/>
<rect x="185" y="78" width="23" height="21" fill="#f8f8f8" shape-rendering="crispEdges"/>
<rect x="185" y="78" width="23" height="1" fill="#a0a0a0" shape-rendering="crispEdges"/>
<rect x="185" y="78" width="1" height="21" fill="#a0a0a0" shape-rendering="crispEdges"/>
<rect x="185" y="98" width="23" height="1" fill="#fff" shape-rendering="crispEdges"/>
<rect x="207" y="78" width="1" height="21" fill="#fff" shape-rendering="crispEdges"/>
<path d="M168.5 82.5 H170.5 L171.5 83.5 H179.5 V87.5 L178.5 88.5 V89.5 L177.5 91 L178.5 92 L179.5 93.5 V95.5 L177.5 96.5 L176.5 95.5 L175.5 94.5 L174.5 94.5 L172.5 96.5 H168.5 V93.5 L167.5 92.5 L166.5 92 V90.5 L167.5 89 V88.5 L166.5 87.5 V85.5 L167.5 84.5 L168.5 84 Z" fill="none" stroke="#800000" stroke-width="1" shape-rendering="crispEdges"/>
<path d="M171.5 83.5 V87.5 L170.5 88.5 V90.5 L171.5 91.5 V93.5 L170.5 94.5 V96 M172.5 88.5 L173.5 89.5 L172.5 90.5" fill="none" stroke="#800000" stroke-width="1" shape-rendering="crispEdges"/>
<rect x="175" y="86" width="2" height="2" fill="#800000" shape-rendering="crispEdges"/>
<rect x="191" y="82" width="1" height="1" fill="#ff00ff" shape-rendering="crispEdges"/>
<rect x="191" y="83" width="3" height="1" fill="#ff00ff" shape-rendering="crispEdges"/>
<rect x="191" y="84" width="7" height="1" fill="#ff00ff" shape-rendering="crispEdges"/>
<rect x="191" y="85" width="6" height="1" fill="#ff00ff" shape-rendering="crispEdges"/>
<rect x="191" y="86" width="5" height="1" fill="#ff00ff" shape-rendering="crispEdges"/>
<rect x="191" y="87" width="10" height="1" fill="#ff00ff" shape-rendering="crispEdges"/>
<rect x="191" y="88" width="14" height="1" fill="#ff00ff" shape-rendering="crispEdges"/>
<rect x="191" y="89" width="12" height="1" fill="#008080" shape-rendering="crispEdges"/>
<rect x="191" y="90" width="10" height="1" fill="#008080" shape-rendering="crispEdges"/>
<rect x="191" y="91" width="7" height="1" fill="#008080" shape-rendering="crispEdges"/>
<rect x="191" y="92" width="4" height="1" fill="#008080" shape-rendering="crispEdges"/>
<rect x="191" y="93" width="6" height="1" fill="#008080" shape-rendering="crispEdges"/>
<rect x="191" y="94" width="2" height="1" fill="#008080" shape-rendering="crispEdges"/>
<rect x="190" y="82" width="1" height="16" fill="#800000" shape-rendering="crispEdges"/>
<rect x="189" y="96" width="16" height="1" fill="#800000" shape-rendering="crispEdges"/>
<rect x="210" y="78" width="1" height="22" fill="#a0a0a0" shape-rendering="crispEdges"/>
<rect x="211" y="78" width="1" height="22" fill="#fff" shape-rendering="crispEdges"/>
<rect x="217" y="81" width="3" height="15" fill="#000" shape-rendering="crispEdges"/>
<rect x="218" y="82" width="1" height="13" fill="#808000" shape-rendering="crispEdges"/>
<polygon points="220.5,88.5 231.5,82.5 231.5,94.5" fill="#808000" stroke="#000" stroke-width="1"/>
<polygon points="240.5,82.5 251.5,88.5 240.5,94.5" fill="#808000" stroke="#000" stroke-width="1"/>
<rect x="252" y="81" width="3" height="15" fill="#000" shape-rendering="crispEdges"/>
<rect x="253" y="82" width="1" height="13" fill="#808000" shape-rendering="crispEdges"/>
<polygon points="264,88.5 278,82 273,88.5" fill="#fff" stroke="none" stroke-width="1"/>
<polygon points="278,82 278,95.5 273,88.5" fill="#808080" stroke="none" stroke-width="1"/>
<polygon points="264,88.5 273,88.5 278,95.5" fill="#000" stroke="none" stroke-width="1"/>
<polygon points="287,82 301,88.5 292,88.5" fill="#fff" stroke="none" stroke-width="1"/>
<polygon points="287,82 287,95.5 292,88.5" fill="#808080" stroke="none" stroke-width="1"/>
<polygon points="287,95.5 301,88.5 292,88.5" fill="#000" stroke="none" stroke-width="1"/>
<polygon points="309.0,88.5 316.5,81.0 324.0,88.5 316.5,96.0" fill="#ffff00" stroke="#000" stroke-width="1"/>
<line x1="312.5" y1="88.5" x2="321.0" y2="88.5" stroke="#000" stroke-width="1.1"/>
<polygon points="311.0,88.5 314.0,85.5 314.0,91.5" fill="#000" stroke="none" stroke-width="1"/>
<polygon points="332.0,88.5 339.5,81.0 347.0,88.5 339.5,96.0" fill="#ffff00" stroke="#000" stroke-width="1"/>
<line x1="335.0" y1="88.5" x2="343.5" y2="88.5" stroke="#000" stroke-width="1.1"/>
<polygon points="345.0,88.5 342.0,91.5 342.0,85.5" fill="#000" stroke="none" stroke-width="1"/>
<polygon points="355.0,88.5 362.5,81.0 370.0,88.5 362.5,96.0" fill="#ffff00" stroke="#000" stroke-width="1"/>
<line x1="362.5" y1="83.5" x2="362.5" y2="93.5" stroke="#d0d090" stroke-width="1" stroke-dasharray="2 1"/>
<line x1="358.5" y1="88.5" x2="366.5" y2="88.5" stroke="#000" stroke-width="1.1"/>
<polygon points="356.7,88.5 359.59999999999997,85.6 359.59999999999997,91.4" fill="#000" stroke="none" stroke-width="1"/>
<polygon points="368.3,88.5 365.40000000000003,91.4 365.40000000000003,85.6" fill="#000" stroke="none" stroke-width="1"/>
<polygon points="378.0,88.5 385.5,81.0 393.0,88.5 385.5,96.0" fill="#ffff00" stroke="#000" stroke-width="1"/>
<line x1="385.5" y1="83.5" x2="385.5" y2="93.5" stroke="#d0d090" stroke-width="1" stroke-dasharray="1 2"/>
<line x1="380.0" y1="88.5" x2="391.0" y2="88.5" stroke="#000" stroke-width="1.1"/>
<polygon points="384.9,88.5 382.09999999999997,91.3 382.09999999999997,85.7" fill="#000" stroke="none" stroke-width="1"/>
<polygon points="386.1,88.5 388.90000000000003,85.7 388.90000000000003,91.3" fill="#000" stroke="none" stroke-width="1"/>
<polygon points="401.0,88.5 408.5,81.0 416.0,88.5 408.5,96.0" fill="#ffff00" stroke="#000" stroke-width="1"/>
<line x1="403.5" y1="88.5" x2="413.5" y2="88.5" stroke="#000" stroke-width="1"/>
<line x1="408.5" y1="83.5" x2="408.5" y2="93.5" stroke="#000" stroke-width="1"/>
<polygon points="407.7,88.5 405.3,90.9 405.3,86.1" fill="#000" stroke="none" stroke-width="1"/>
<polygon points="409.3,88.5 411.7,86.1 411.7,90.9" fill="#000" stroke="none" stroke-width="1"/>
<polygon points="408.5,87.7 406.1,85.3 410.9,85.3" fill="#000" stroke="none" stroke-width="1"/>
<polygon points="408.5,89.3 410.9,91.7 406.1,91.7" fill="#000" stroke="none" stroke-width="1"/>
<polygon points="424.0,88.5 431.5,81.0 439.0,88.5 431.5,96.0" fill="#ffff00" stroke="#000" stroke-width="1"/>
<line x1="426.5" y1="88.5" x2="436.5" y2="88.5" stroke="#000" stroke-width="1"/>
<line x1="431.5" y1="83.5" x2="431.5" y2="93.5" stroke="#000" stroke-width="1"/>
<polygon points="425.5,88.5 427.9,86.1 427.9,90.9" fill="#000" stroke="none" stroke-width="1"/>
<polygon points="437.5,88.5 435.1,90.9 435.1,86.1" fill="#000" stroke="none" stroke-width="1"/>
<polygon points="431.5,82.5 433.9,84.9 429.1,84.9" fill="#000" stroke="none" stroke-width="1"/>
<polygon points="431.5,94.5 429.1,92.1 433.9,92.1" fill="#000" stroke="none" stroke-width="1"/>
<rect x="446" y="78" width="1" height="22" fill="#a0a0a0" shape-rendering="crispEdges"/>
<rect x="447" y="78" width="1" height="22" fill="#fff" shape-rendering="crispEdges"/>
<path d="M458 96 l-3 -5 q-1.5 -2.5 0.5 -3 l2.5 2 v-7 q1 -1.5 2 0 v-1.5 q1 -1.5 2 0 v1.5 q1 -1.5 2 0 v2 q1 -1 2 0.5 v5 q0 3 -2.5 6" fill="#f8f8f8" stroke="#000" stroke-width="1.2"/>
<line x1="460.5" y1="84" x2="460.5" y2="88" stroke="#000" stroke-width="1"/>
<line x1="462.5" y1="83" x2="462.5" y2="88" stroke="#000" stroke-width="1"/>
<line x1="464.5" y1="84.5" x2="464.5" y2="88" stroke="#000" stroke-width="1"/>
<rect x="473" y="78" width="23" height="21" fill="#f8f8f8" shape-rendering="crispEdges"/>
<rect x="473" y="78" width="23" height="1" fill="#a0a0a0" shape-rendering="crispEdges"/>
<rect x="473" y="78" width="1" height="21" fill="#a0a0a0" shape-rendering="crispEdges"/>
<rect x="473" y="98" width="23" height="1" fill="#fff" shape-rendering="crispEdges"/>
<rect x="495" y="78" width="1" height="21" fill="#fff" shape-rendering="crispEdges"/>
<rect x="478" y="89" width="13" height="1" fill="#000" shape-rendering="crispEdges"/>
<rect x="484" y="83" width="1" height="14" fill="#000" shape-rendering="crispEdges"/>
<polyline points="499,85.3 503.5,93.4 509.6,84.3 514.7,91.6" fill="none" stroke="#000" stroke-width="1.1"/>
<circle cx="503.5" cy="93.4" r="2" fill="none" stroke="#ff0000" stroke-width="1.3"/>
<circle cx="509.6" cy="84.3" r="2" fill="none" stroke="#ff0000" stroke-width="1.3"/>
<path d="M522.5 82.5 H525 L525.5 81.5 H528 L528.5 82.5 H530.5 L531 81.5 H534 L534.5 82.5 H536.5 V85.5 L535.5 86.5 V92.5 L534.5 93.5 H529.5 V95.5 H526.5 V89.5 H523.5 V86.5 L522.5 85.5 Z" fill="none" stroke="#800080" stroke-width="1.15"/>
<path d="M524 86 L526 87 L528 86 L530 87 L532 86 L535 86.5 M527.5 88.8 H533.5 V91.5 H530.5 M530 89 h1.5 v1.5 h-1.5 z" fill="none" stroke="#800080" stroke-width="1.1"/>
<rect x="542" y="78" width="23" height="21" fill="#f8f8f8" shape-rendering="crispEdges"/>
<rect x="542" y="78" width="23" height="1" fill="#a0a0a0" shape-rendering="crispEdges"/>
<rect x="542" y="78" width="1" height="21" fill="#a0a0a0" shape-rendering="crispEdges"/>
<rect x="542" y="98" width="23" height="1" fill="#fff" shape-rendering="crispEdges"/>
<rect x="564" y="78" width="1" height="21" fill="#fff" shape-rendering="crispEdges"/>
<path d="M549 82.4 L551 82.4 L552.1 85.4 L553.7 82.4 L557.5 82.4 L559.1 83.8 L559.9 86.9 L560.8 88 L560.8 89.6 L559.1 90.8 L560.8 92.7 L560.8 94.3 L558.7 96.5 L557.2 96.5 L556.4 95.4 L553.3 95.4 L552.1 94.3 L551 95.4 L546.4 95.4 L546.4 90.4 L548.2 89.2 L546.4 88.5 L546.4 86.1 L547.5 83.8 Z" fill="none" stroke="#008080" stroke-width="1.15"/>
<path d="M546.4 92.3 H552.1 L554.4 91.2 M552.5 88.5 h2 M556 88.5 h2" fill="none" stroke="#008080" stroke-width="1.1"/>
<path d="M552.1 85.4 V90.5 M555 83.8 L558.8 86.5 M557.5 91 L558.5 93" fill="none" stroke="#008080" stroke-width="1" stroke-dasharray="1 1"/>
<rect x="567" y="78" width="1" height="22" fill="#a0a0a0" shape-rendering="crispEdges"/>
<rect x="568" y="78" width="1" height="22" fill="#fff" shape-rendering="crispEdges"/>
<rect x="576" y="83" width="13" height="14" fill="#404040" shape-rendering="crispEdges"/>
<rect x="575" y="82" width="13" height="14" fill="#000" shape-rendering="crispEdges"/>
<rect x="576" y="83" width="11" height="12" fill="#fff" shape-rendering="crispEdges"/>
<rect x="576" y="83" width="11" height="3" fill="#00e0e0" shape-rendering="crispEdges"/>
<polygon points="577,82 578.5,80 580,82" fill="#fff" stroke="#000" stroke-width="0.8"/>
<polygon points="583,82 584.5,80 586,82" fill="#fff" stroke="#000" stroke-width="0.8"/>
<text x="581.5" y="94" fill="#ff0000" font-size="9" font-weight="bold" font-family="'Liberation Sans','Noto Sans CJK SC',sans-serif" textLength="9.5" lengthAdjust="spacingAndGlyphs" text-anchor="middle">21</text>
<rect x="597" y="81" width="16" height="16" fill="#000" shape-rendering="crispEdges"/>
<rect x="598" y="82" width="14" height="14" fill="#008080" shape-rendering="crispEdges"/>
<rect x="598" y="82" width="14" height="1" fill="#00ffff" shape-rendering="crispEdges"/>
<rect x="598" y="82" width="1" height="14" fill="#00ffff" shape-rendering="crispEdges"/>
<rect x="600" y="84" width="10" height="3" fill="#c0e0e0" shape-rendering="crispEdges"/>
<rect x="600" y="88" width="2" height="1" fill="#fff" shape-rendering="crispEdges"/>
<rect x="604" y="88" width="2" height="1" fill="#fff" shape-rendering="crispEdges"/>
<rect x="608" y="88" width="2" height="1" fill="#fff" shape-rendering="crispEdges"/>
<rect x="600" y="91" width="2" height="1" fill="#fff" shape-rendering="crispEdges"/>
<rect x="604" y="91" width="2" height="1" fill="#fff" shape-rendering="crispEdges"/>
<rect x="608" y="91" width="2" height="1" fill="#fff" shape-rendering="crispEdges"/>
<rect x="600" y="94" width="2" height="1" fill="#fff" shape-rendering="crispEdges"/>
<rect x="604" y="94" width="2" height="1" fill="#fff" shape-rendering="crispEdges"/>
<rect x="608" y="94" width="2" height="1" fill="#fff" shape-rendering="crispEdges"/>
<rect x="620" y="81" width="16" height="16" fill="#000" shape-rendering="crispEdges"/>
<rect x="622" y="82" width="13" height="14" fill="#fff" shape-rendering="crispEdges"/>
<rect x="621" y="83" width="1" height="1" fill="#fff" shape-rendering="crispEdges"/>
<rect x="621" y="85" width="1" height="1" fill="#fff" shape-rendering="crispEdges"/>
<rect x="621" y="87" width="1" height="1" fill="#fff" shape-rendering="crispEdges"/>
<rect x="621" y="89" width="1" height="1" fill="#fff" shape-rendering="crispEdges"/>
<rect x="621" y="91" width="1" height="1" fill="#fff" shape-rendering="crispEdges"/>
<rect x="621" y="93" width="1" height="1" fill="#fff" shape-rendering="crispEdges"/>
<rect x="625" y="84" width="7" height="1" fill="#0000ff" shape-rendering="crispEdges"/>
<rect x="625" y="86" width="7" height="1" fill="#0000ff" shape-rendering="crispEdges"/>
<rect x="625" y="88" width="7" height="1" fill="#0000ff" shape-rendering="crispEdges"/>
<rect x="625" y="90" width="7" height="1" fill="#0000ff" shape-rendering="crispEdges"/>
<rect x="625" y="92" width="4" height="1" fill="#0000ff" shape-rendering="crispEdges"/>
<polygon points="630,96 635,91 635,96" fill="#808080" stroke="#000" stroke-width="0.8"/>
<rect x="643" y="82" width="16" height="15" fill="#000" shape-rendering="crispEdges"/>
<rect x="644" y="83" width="14" height="13" fill="#ff0000" shape-rendering="crispEdges"/>
<rect x="647" y="83" width="10" height="8" fill="#80d0f0" shape-rendering="crispEdges"/>
<rect x="647" y="83" width="2" height="2" fill="#ffff00" shape-rendering="crispEdges"/>
<polygon points="651,91 657,85 657,91" fill="#008000" stroke="none" stroke-width="1"/>
<rect x="647" y="90" width="10" height="1" fill="#0000c0" shape-rendering="crispEdges"/>
<rect x="648" y="93" width="7" height="3" fill="#fff" shape-rendering="crispEdges"/>
<rect x="649" y="93" width="2" height="3" fill="#000" shape-rendering="crispEdges"/>
<rect x="670" y="81" width="9" height="8" fill="#000080" shape-rendering="crispEdges"/>
<rect x="671" y="83" width="7" height="5" fill="#fff" shape-rendering="crispEdges"/>
<rect x="666" y="85" width="9" height="8" fill="#000080" shape-rendering="crispEdges"/>
<rect x="667" y="87" width="7" height="5" fill="#fff" shape-rendering="crispEdges"/>
<rect x="668" y="89" width="2" height="2" fill="#808080" shape-rendering="crispEdges"/>
<rect x="671" y="89" width="2" height="2" fill="#808080" shape-rendering="crispEdges"/>
<circle cx="677" cy="92" r="4.3" fill="#00c0c0" stroke="#000" stroke-width="1"/>
<polygon points="675,90 678,89 680,92 677,94 675,93" fill="#e0e000" stroke="none" stroke-width="1"/>
<polygon points="673.5,92 675,94 676,96 674,94.5" fill="#008000" stroke="none" stroke-width="1"/>
<rect x="694" y="81" width="10" height="9" fill="#808060" shape-rendering="crispEdges"/>
<rect x="695" y="82" width="8" height="6" fill="#0000e0" shape-rendering="crispEdges"/>
<rect x="693" y="90" width="12" height="5" fill="#808060" shape-rendering="crispEdges"/>
<rect x="694" y="91" width="10" height="1" fill="#c0c0a0" shape-rendering="crispEdges"/>
<rect x="698" y="95" width="7" height="2" fill="#000" shape-rendering="crispEdges"/>
<rect x="690" y="85" width="4" height="11" fill="#fff" shape-rendering="crispEdges"/>
<rect x="690.5" y="85.5" width="3" height="10" fill="none" stroke="#606040" stroke-width="1" shape-rendering="crispEdges"/>
<rect x="691" y="89" width="2" height="3" fill="#0000c0" shape-rendering="crispEdges"/>
<rect x="691" y="93" width="2" height="2" fill="#ff0000" shape-rendering="crispEdges"/>
<line x1="690" y1="85" x2="693" y2="82" stroke="#404040" stroke-width="1"/>
<rect x="4" y="105" width="1" height="19" fill="#fff" shape-rendering="crispEdges"/>
<rect x="5" y="105" width="1" height="20" fill="#a0a0a0" shape-rendering="crispEdges"/>
<rect x="4" y="124" width="1" height="1" fill="#a0a0a0" shape-rendering="crispEdges"/>
<polygon points="18.2,110.3 26,114.1 25.6,118.1 16.5,120.7 15.2,118.7" fill="#b4b4b4" stroke="#000" stroke-width="1"/>
<line x1="19.5" y1="112.5" x2="23.5" y2="118.0" stroke="#ececec" stroke-width="2.2"/>
<polygon points="19.8,109.5 22,106.8 23.6,108.1 24.6,107.2 26,108.1 26,114.3 18.5,110.5" fill="#ff0000" stroke="none" stroke-width="1"/>
<line x1="20.2" y1="109.1" x2="15.2" y2="118.5" stroke="#000" stroke-width="1.1"/>
<polygon points="15.2,118.1 19,119.5 15.2,121.3" fill="#ff0000" stroke="none" stroke-width="1"/>
<polyline points="11,119.2 14.3,122.6 15.3,120.8" fill="none" stroke="#000" stroke-width="1.1"/>
<rect x="36.0" y="109" width="1.4" height="12" fill="#000"/>
<rect x="40.05" y="109" width="1.4" height="12" fill="#000"/>
<rect x="44.1" y="109" width="1.4" height="12" fill="#000"/>
<rect x="34.5" y="114" width="14.5" height="1.3" fill="#000"/>
<rect x="57" y="109" width="16" height="1.4" fill="#000" shape-rendering="crispEdges"/>
<rect x="58" y="107" width="1.3" height="5.5" fill="#000" shape-rendering="crispEdges"/>
<rect x="61" y="107" width="1.3" height="4" fill="#000" shape-rendering="crispEdges"/>
<rect x="64" y="107" width="1.3" height="4" fill="#000" shape-rendering="crispEdges"/>
<rect x="67" y="107" width="1.3" height="4" fill="#000" shape-rendering="crispEdges"/>
<rect x="70" y="107" width="1.3" height="5.5" fill="#000" shape-rendering="crispEdges"/>
<text x="65" y="121.5" fill="#808000" font-size="10.5" font-weight="500" font-family="'Noto Sans CJK SC','Liberation Sans',sans-serif" text-anchor="middle">金</text>
<rect x="80" y="109" width="16" height="1.4" fill="#000" shape-rendering="crispEdges"/>
<rect x="81" y="107" width="1.3" height="5.5" fill="#000" shape-rendering="crispEdges"/>
<rect x="85" y="107" width="1.3" height="4" fill="#000" shape-rendering="crispEdges"/>
<rect x="89" y="107" width="1.3" height="4" fill="#000" shape-rendering="crispEdges"/>
<rect x="93" y="107" width="1.3" height="5.5" fill="#000" shape-rendering="crispEdges"/>
<text x="88" y="121.5" fill="#808000" font-size="10.5" font-weight="500" font-family="'Noto Sans CJK SC','Liberation Sans',sans-serif" text-anchor="middle">金</text>
<rect x="103" y="109" width="16" height="1.4" fill="#000" shape-rendering="crispEdges"/>
<rect x="104" y="107" width="1.3" height="5.5" fill="#000" shape-rendering="crispEdges"/>
<rect x="107" y="107" width="1.3" height="4" fill="#000" shape-rendering="crispEdges"/>
<rect x="110" y="107" width="1.3" height="4" fill="#000" shape-rendering="crispEdges"/>
<rect x="113" y="107" width="1.3" height="4" fill="#000" shape-rendering="crispEdges"/>
<rect x="116" y="107" width="1.3" height="5.5" fill="#000" shape-rendering="crispEdges"/>
<text x="111" y="121" fill="#000" font-size="10.5" font-weight="normal" font-family="'Liberation Sans','Noto Sans CJK SC',sans-serif" text-anchor="middle">F</text>
<rect x="126" y="109" width="16" height="1.4" fill="#000" shape-rendering="crispEdges"/>
<rect x="127" y="107" width="1.3" height="5.5" fill="#000" shape-rendering="crispEdges"/>
<rect x="130" y="107" width="1.3" height="4" fill="#000" shape-rendering="crispEdges"/>
<rect x="133" y="107" width="1.3" height="4" fill="#000" shape-rendering="crispEdges"/>
<rect x="136" y="107" width="1.3" height="4" fill="#000" shape-rendering="crispEdges"/>
<rect x="139" y="107" width="1.3" height="5.5" fill="#000" shape-rendering="crispEdges"/>
<path d="M129 113.5 q10 -2 10.5 3.5 q0 5 -5.5 5 q-4.5 0 -4.5 -3 q0 -2.5 3 -2.5 q2.5 0 2.5 1.5" fill="none" stroke="#000" stroke-width="1.3"/>
<polygon points="157.2,109.3 165,113.1 164.6,117.1 155.5,119.7 154.2,117.7" fill="#b4b4b4" stroke="#000" stroke-width="1"/>
<line x1="158.5" y1="111.5" x2="162.5" y2="117.0" stroke="#ececec" stroke-width="2.2"/>
<polygon points="158.8,108.5 161,105.8 162.6,107.1 163.6,106.2 165,107.1 165,113.3 157.5,109.5" fill="#ff0000" stroke="none" stroke-width="1"/>
<line x1="159.2" y1="108.1" x2="154.2" y2="117.5" stroke="#000" stroke-width="1.1"/>
<polygon points="154.2,117.1 158,118.5 154.2,120.3" fill="#ff0000" stroke="none" stroke-width="1"/>
<rect x="149" y="120" width="16" height="1.3" fill="#000" shape-rendering="crispEdges"/>
<rect x="149" y="118" width="1.3" height="5" fill="#000" shape-rendering="crispEdges"/>
<rect x="154.5" y="118.5" width="1.2" height="4" fill="#000" shape-rendering="crispEdges"/>
<rect x="157.5" y="118.5" width="1.2" height="4" fill="#000" shape-rendering="crispEdges"/>
<rect x="160.5" y="118.5" width="1.2" height="4" fill="#000" shape-rendering="crispEdges"/>
<rect x="163" y="118.5" width="1.2" height="4" fill="#000" shape-rendering="crispEdges"/>
<circle cx="180" cy="114.6" r="7.5" fill="none" stroke="#000" stroke-width="1.3"/>
<rect x="173.5" y="114" width="13" height="1.3" fill="#000" shape-rendering="crispEdges"/>
<rect x="175" y="112.5" width="1" height="4.5" fill="#000" shape-rendering="crispEdges"/>
<rect x="177" y="112.5" width="1" height="4.5" fill="#000" shape-rendering="crispEdges"/>
<rect x="179" y="112.5" width="1" height="4.5" fill="#000" shape-rendering="crispEdges"/>
<rect x="181" y="112.5" width="1" height="4.5" fill="#000" shape-rendering="crispEdges"/>
<rect x="183" y="112.5" width="1" height="4.5" fill="#000" shape-rendering="crispEdges"/>
<rect x="185" y="112.5" width="1" height="4.5" fill="#000" shape-rendering="crispEdges"/>
<line x1="182" y1="110" x2="187" y2="107" stroke="#000" stroke-width="1.2"/>
<rect x="197.0" y="109" width="1.4" height="12" fill="#000"/>
<rect x="201.05" y="109" width="1.4" height="12" fill="#000"/>
<rect x="205.1" y="109" width="1.4" height="12" fill="#000"/>
<rect x="209.15" y="109" width="1.4" height="12" fill="#000"/>
<rect x="195.5" y="114" width="15.5" height="1.3" fill="#000"/>
<rect x="218" y="109" width="16" height="1.4" fill="#000" shape-rendering="crispEdges"/>
<rect x="220" y="107" width="1.3" height="4" fill="#000" shape-rendering="crispEdges"/>
<rect x="224" y="107" width="1.3" height="4" fill="#000" shape-rendering="crispEdges"/>
<rect x="227" y="107" width="1.3" height="4" fill="#000" shape-rendering="crispEdges"/>
<rect x="231" y="107" width="1.3" height="4" fill="#000" shape-rendering="crispEdges"/>
<text x="224" y="122" fill="#000" font-size="11" font-weight="normal" font-family="'Liberation Sans','Noto Sans CJK SC',sans-serif" text-anchor="middle">n</text>
<text x="229.7" y="118.5" fill="#000" font-size="8" font-weight="normal" font-family="'Liberation Sans','Noto Sans CJK SC',sans-serif" text-anchor="middle">2</text>
<rect x="248" y="107.5" width="1" height="15.5" fill="#808080" shape-rendering="crispEdges"/>
<rect x="252" y="107.5" width="1" height="15.5" fill="#808080" shape-rendering="crispEdges"/>
<rect x="256" y="107.5" width="1" height="15.5" fill="#808080" shape-rendering="crispEdges"/>
<polygon points="241,121.7 248,108 254.7,114.6" fill="none" stroke="#000" stroke-width="1.2"/>
<rect x="264" y="116" width="16" height="1.3" fill="#ff0000" shape-rendering="crispEdges"/>
<rect x="271" y="107" width="1.3" height="16" fill="#ff0000" shape-rendering="crispEdges"/>
<path d="M279.5 112 q-3 -5 -8 -4.5 q-6.5 0.5 -6.5 7 q0 5.5 6 5.5 q4.5 0 4.5 -4 q0 -3 -3 -3 q-2.5 0 -2.5 2.5" fill="none" stroke="#000" stroke-width="1.3"/>
<circle cx="294.6" cy="114.6" r="3.3" fill="none" stroke="#808080" stroke-width="0.8"/>
<circle cx="294.6" cy="114.6" r="6" fill="none" stroke="#808080" stroke-width="0.8"/>
<line x1="289.5" y1="109.5" x2="299.7" y2="119.7" stroke="#008080" stroke-width="1"/>
<line x1="299.7" y1="109.5" x2="289.5" y2="119.7" stroke="#008080" stroke-width="1"/>
<line x1="287.5" y1="114.6" x2="302" y2="114.6" stroke="#ff0000" stroke-width="1" stroke-dasharray="2 1"/>
<line x1="294.6" y1="107.5" x2="294.6" y2="122" stroke="#ff0000" stroke-width="1" stroke-dasharray="2 1"/>
<rect x="293.6" y="113.6" width="2" height="2" fill="#ff0000" shape-rendering="crispEdges"/>
<rect x="311.1" y="108.1" width="13" height="13" fill="none" stroke="#a0a0a0" stroke-width="1" shape-rendering="crispEdges"/>
<rect x="313.1" y="110.1" width="9" height="9" fill="none" stroke="#a0a0a0" stroke-width="1" shape-rendering="crispEdges"/>
<rect x="315.1" y="112.1" width="5" height="5" fill="none" stroke="#a0a0a0" stroke-width="1" shape-rendering="crispEdges"/>
<rect x="317" y="107" width="1" height="15" fill="#008080" shape-rendering="crispEdges"/>
<rect x="310.5" y="114" width="15" height="1" fill="#008080" shape-rendering="crispEdges"/>
<rect x="310" y="107" width="1" height="1" fill="#ff0000" shape-rendering="crispEdges"/>
<rect x="310" y="114" width="1" height="1" fill="#ff0000" shape-rendering="crispEdges"/>
<rect x="310" y="121" width="1" height="1" fill="#ff0000" shape-rendering="crispEdges"/>
<rect x="317" y="107" width="1" height="1" fill="#ff0000" shape-rendering="crispEdges"/>
<rect x="317" y="121" width="1" height="1" fill="#ff0000" shape-rendering="crispEdges"/>
<rect x="324" y="107" width="1" height="1" fill="#ff0000" shape-rendering="crispEdges"/>
<rect x="324" y="114" width="1" height="1" fill="#ff0000" shape-rendering="crispEdges"/>
<rect x="324" y="121" width="1" height="1" fill="#ff0000" shape-rendering="crispEdges"/>
<rect x="316" y="113" width="3" height="3" fill="#ff4040" shape-rendering="crispEdges"/>
<rect x="334" y="108" width="1.3" height="14" fill="#000" shape-rendering="crispEdges"/>
<rect x="340.5" y="108" width="1.3" height="14" fill="#000" shape-rendering="crispEdges"/>
<line x1="334.6" y1="118.5" x2="341" y2="109.5" stroke="#000" stroke-width="1.3"/>
<rect x="344" y="108.5" width="1.2" height="3" fill="#000" shape-rendering="crispEdges"/>
<rect x="347" y="108.5" width="1.2" height="3" fill="#000" shape-rendering="crispEdges"/>
<rect x="356" y="109" width="16" height="1.3" fill="#000" shape-rendering="crispEdges"/>
<rect x="356" y="107" width="1.3" height="7" fill="#000" shape-rendering="crispEdges"/>
<rect x="370.7" y="107" width="1.3" height="7" fill="#000" shape-rendering="crispEdges"/>
<rect x="360.5" y="107" width="1.2" height="4.5" fill="#000" shape-rendering="crispEdges"/>
<rect x="365" y="107" width="1.2" height="4.5" fill="#000" shape-rendering="crispEdges"/>
<text x="364" y="122.5" fill="#ff0000" font-size="11" font-weight="500" font-family="'Noto Sans CJK SC','Liberation Sans',sans-serif" text-anchor="middle">神</text>
<rect x="379" y="109" width="16" height="1.3" fill="#000" shape-rendering="crispEdges"/>
<rect x="379" y="107" width="1.3" height="7" fill="#000" shape-rendering="crispEdges"/>
<rect x="393.7" y="107" width="1.3" height="7" fill="#000" shape-rendering="crispEdges"/>
<rect x="383.5" y="107" width="1.2" height="4.5" fill="#000" shape-rendering="crispEdges"/>
<rect x="388" y="107" width="1.2" height="4.5" fill="#000" shape-rendering="crispEdges"/>
<text x="387" y="122.5" fill="#ff0000" font-size="11" font-weight="500" font-family="'Noto Sans CJK SC','Liberation Sans',sans-serif" text-anchor="middle">赢</text>
<rect x="404" y="108" width="13" height="1.3" fill="#000" shape-rendering="crispEdges"/>
<rect x="404" y="108" width="1.3" height="13" fill="#000" shape-rendering="crispEdges"/>
<rect x="402.5" y="120" width="3" height="1.3" fill="#000" shape-rendering="crispEdges"/>
<rect x="406" y="109" width="1" height="2.5" fill="#000" shape-rendering="crispEdges"/>
<rect x="408" y="109" width="1" height="2.5" fill="#000" shape-rendering="crispEdges"/>
<rect x="410" y="109" width="1" height="2.5" fill="#000" shape-rendering="crispEdges"/>
<rect x="412" y="109" width="1" height="2.5" fill="#000" shape-rendering="crispEdges"/>
<rect x="414" y="109" width="1" height="2.5" fill="#000" shape-rendering="crispEdges"/>
<rect x="416" y="109" width="1" height="2.5" fill="#000" shape-rendering="crispEdges"/>
<rect x="406" y="113" width="1" height="2" fill="#000" shape-rendering="crispEdges"/>
<rect x="408" y="113" width="1" height="2" fill="#000" shape-rendering="crispEdges"/>
<rect x="410" y="113" width="1" height="2" fill="#000" shape-rendering="crispEdges"/>
<rect x="412" y="113" width="1" height="2" fill="#000" shape-rendering="crispEdges"/>
<rect x="414" y="113" width="1" height="2" fill="#000" shape-rendering="crispEdges"/>
<rect x="416" y="113" width="1" height="2" fill="#000" shape-rendering="crispEdges"/>
<rect x="405" y="115.5" width="12" height="1" fill="#000" shape-rendering="crispEdges"/>
<text x="407" y="122.5" fill="#000" font-size="5.5" font-weight="bold" font-family="'Liberation Sans','Noto Sans CJK SC',sans-serif" textLength="10.5" lengthAdjust="spacingAndGlyphs">123</text>
<rect x="425" y="109" width="1.4" height="10" fill="#000" shape-rendering="crispEdges"/>
<rect x="439" y="109" width="1.4" height="10" fill="#000" shape-rendering="crispEdges"/>
<rect x="432" y="107" width="1.4" height="16" fill="#000" shape-rendering="crispEdges"/>
<rect x="425" y="113.3" width="15" height="1.2" fill="#000" shape-rendering="crispEdges"/>
<polygon points="426.5,114 429.5,111.5 429.5,116.5" fill="#000" stroke="none" stroke-width="1"/>
<polygon points="439,114 436,111.5 436,116.5" fill="#000" stroke="none" stroke-width="1"/>
<rect x="446" y="103" width="1" height="24" fill="#a0a0a0" shape-rendering="crispEdges"/>
<rect x="447" y="103" width="1" height="24" fill="#fff" shape-rendering="crispEdges"/>
<rect x="451" y="105" width="1" height="19" fill="#fff" shape-rendering="crispEdges"/>
<rect x="452" y="105" width="1" height="20" fill="#a0a0a0" shape-rendering="crispEdges"/>
<rect x="451" y="124" width="1" height="1" fill="#a0a0a0" shape-rendering="crispEdges"/>
<rect x="463.7" y="108.7" width="8.8" height="8.8" fill="none" stroke="#000" stroke-width="1.4"/>
<rect x="458" y="108" width="4" height="1" fill="#808080" shape-rendering="crispEdges"/>
<rect x="458" y="117" width="4" height="1" fill="#808080" shape-rendering="crispEdges"/>
<rect x="460" y="108" width="1" height="10" fill="#808080" shape-rendering="crispEdges"/>
<rect x="463" y="119" width="1" height="4" fill="#808080" shape-rendering="crispEdges"/>
<rect x="472" y="119" width="1" height="4" fill="#808080" shape-rendering="crispEdges"/>
<rect x="463" y="121" width="10" height="1" fill="#808080" shape-rendering="crispEdges"/>
<line x1="482" y1="121.7" x2="484.6" y2="107" stroke="#800000" stroke-width="1"/>
<line x1="482" y1="121.7" x2="489.7" y2="107" stroke="#ff0000" stroke-width="1"/>
<line x1="482" y1="121.7" x2="496.2" y2="107.5" stroke="#000" stroke-width="1"/>
<line x1="482" y1="121.7" x2="497" y2="114" stroke="#ff0000" stroke-width="1"/>
<line x1="482" y1="121.7" x2="497" y2="119.7" stroke="#800000" stroke-width="1"/>
<rect x="481" y="120" width="3" height="3" fill="#c00000" shape-rendering="crispEdges"/>
<rect x="504.7" y="109.7" width="12.8" height="12.6" fill="none" stroke="#000" stroke-width="1.4"/>
<line x1="505" y1="122" x2="508.4" y2="107" stroke="#800080" stroke-width="1"/>
<line x1="505" y1="122" x2="513.4" y2="107" stroke="#800000" stroke-width="1"/>
<line x1="505" y1="122" x2="519.5" y2="107.5" stroke="#ff0000" stroke-width="1"/>
<line x1="505" y1="122" x2="520" y2="113" stroke="#800000" stroke-width="1"/>
<line x1="505" y1="122" x2="520" y2="118.7" stroke="#800080" stroke-width="1"/>
<rect x="527.7" y="107.7" width="12.8" height="12.6" fill="none" stroke="#000" stroke-width="1.4"/>
<line x1="528" y1="108" x2="543.2" y2="117" stroke="#800000" stroke-width="1"/>
<line x1="528" y1="108" x2="537.5" y2="122.7" stroke="#800000" stroke-width="1"/>
<line x1="528" y1="108" x2="543.2" y2="122.7" stroke="#ff0000" stroke-width="1"/>
<polyline points="528,108 532,122.5" fill="none" stroke="#800080" stroke-width="1.2"/>
<polyline points="528,108 534,111 543,111.5" fill="none" stroke="#800080" stroke-width="1.2"/>
<line x1="550.3" y1="122.7" x2="566" y2="107" stroke="#000" stroke-width="1"/>
<line x1="550.3" y1="122.7" x2="566" y2="114.6" stroke="#000" stroke-width="1"/>
<line x1="550.3" y1="122.7" x2="566" y2="118.7" stroke="#000" stroke-width="1"/>
<polygon points="550,123 556,119 557,121.5" fill="#000" stroke="none" stroke-width="1"/>
<polyline points="573,108 579.6,121.2 584.6,112 587.6,117" fill="none" stroke="#000" stroke-width="1"/>
<line x1="573" y1="121.5" x2="588" y2="121.5" stroke="#808080" stroke-width="1" stroke-dasharray="1 1"/>
<rect x="597" y="107" width="1" height="15" fill="#909090" shape-rendering="crispEdges"/>
<rect x="596" y="108" width="15" height="1" fill="#909090" shape-rendering="crispEdges"/>
<rect x="600" y="107" width="1" height="15" fill="#909090" shape-rendering="crispEdges"/>
<rect x="596" y="111" width="15" height="1" fill="#909090" shape-rendering="crispEdges"/>
<rect x="603" y="107" width="1" height="15" fill="#909090" shape-rendering="crispEdges"/>
<rect x="596" y="114" width="15" height="1" fill="#909090" shape-rendering="crispEdges"/>
<rect x="606" y="107" width="1" height="15" fill="#909090" shape-rendering="crispEdges"/>
<rect x="596" y="117" width="15" height="1" fill="#909090" shape-rendering="crispEdges"/>
<rect x="609" y="107" width="1" height="15" fill="#909090" shape-rendering="crispEdges"/>
<rect x="596" y="120" width="15" height="1" fill="#909090" shape-rendering="crispEdges"/>
<rect x="597" y="108" width="1" height="1" fill="#ff0000" shape-rendering="crispEdges"/>
<rect x="597" y="114" width="1" height="1" fill="#ff0000" shape-rendering="crispEdges"/>
<rect x="597" y="120" width="1" height="1" fill="#ff0000" shape-rendering="crispEdges"/>
<rect x="600" y="111" width="1" height="1" fill="#ff0000" shape-rendering="crispEdges"/>
<rect x="600" y="117" width="1" height="1" fill="#ff0000" shape-rendering="crispEdges"/>
<rect x="603" y="108" width="1" height="1" fill="#ff0000" shape-rendering="crispEdges"/>
<rect x="603" y="114" width="1" height="1" fill="#ff0000" shape-rendering="crispEdges"/>
<rect x="603" y="120" width="1" height="1" fill="#ff0000" shape-rendering="crispEdges"/>
<rect x="606" y="111" width="1" height="1" fill="#ff0000" shape-rendering="crispEdges"/>
<rect x="606" y="117" width="1" height="1" fill="#ff0000" shape-rendering="crispEdges"/>
<rect x="609" y="108" width="1" height="1" fill="#ff0000" shape-rendering="crispEdges"/>
<rect x="609" y="114" width="1" height="1" fill="#ff0000" shape-rendering="crispEdges"/>
<rect x="609" y="120" width="1" height="1" fill="#ff0000" shape-rendering="crispEdges"/>
<circle cx="603.5" cy="114.5" r="1.8" fill="none" stroke="#808080" stroke-width="0.8"/>
<circle cx="598.5" cy="109.5" r="1.3" fill="#fff" stroke="#808080" stroke-width="0.7"/>
<circle cx="608.5" cy="109.5" r="1.3" fill="#fff" stroke="#808080" stroke-width="0.7"/>
<circle cx="598.5" cy="119.5" r="1.3" fill="#fff" stroke="#808080" stroke-width="0.7"/>
<circle cx="608.5" cy="119.5" r="1.3" fill="#fff" stroke="#808080" stroke-width="0.7"/>
<rect x="621" y="107" width="1" height="15" fill="#909090" shape-rendering="crispEdges"/>
<rect x="620" y="108" width="15" height="1" fill="#909090" shape-rendering="crispEdges"/>
<rect x="624" y="107" width="1" height="15" fill="#909090" shape-rendering="crispEdges"/>
<rect x="620" y="111" width="15" height="1" fill="#909090" shape-rendering="crispEdges"/>
<rect x="627" y="107" width="1" height="15" fill="#909090" shape-rendering="crispEdges"/>
<rect x="620" y="114" width="15" height="1" fill="#909090" shape-rendering="crispEdges"/>
<rect x="630" y="107" width="1" height="15" fill="#909090" shape-rendering="crispEdges"/>
<rect x="620" y="117" width="15" height="1" fill="#909090" shape-rendering="crispEdges"/>
<rect x="633" y="107" width="1" height="15" fill="#909090" shape-rendering="crispEdges"/>
<rect x="620" y="120" width="15" height="1" fill="#909090" shape-rendering="crispEdges"/>
<rect x="621" y="108" width="1" height="1" fill="#ff0000" shape-rendering="crispEdges"/>
<rect x="621" y="114" width="1" height="1" fill="#ff0000" shape-rendering="crispEdges"/>
<rect x="621" y="120" width="1" height="1" fill="#ff0000" shape-rendering="crispEdges"/>
<rect x="624" y="111" width="1" height="1" fill="#ff0000" shape-rendering="crispEdges"/>
<rect x="624" y="117" width="1" height="1" fill="#ff0000" shape-rendering="crispEdges"/>
<rect x="627" y="108" width="1" height="1" fill="#ff0000" shape-rendering="crispEdges"/>
<rect x="627" y="114" width="1" height="1" fill="#ff0000" shape-rendering="crispEdges"/>
<rect x="627" y="120" width="1" height="1" fill="#ff0000" shape-rendering="crispEdges"/>
<rect x="630" y="111" width="1" height="1" fill="#ff0000" shape-rendering="crispEdges"/>
<rect x="630" y="117" width="1" height="1" fill="#ff0000" shape-rendering="crispEdges"/>
<rect x="633" y="108" width="1" height="1" fill="#ff0000" shape-rendering="crispEdges"/>
<rect x="633" y="114" width="1" height="1" fill="#ff0000" shape-rendering="crispEdges"/>
<rect x="633" y="120" width="1" height="1" fill="#ff0000" shape-rendering="crispEdges"/>
<circle cx="627.5" cy="114.5" r="1.8" fill="none" stroke="#808080" stroke-width="0.8"/>
<circle cx="622.5" cy="109.5" r="1.3" fill="#fff" stroke="#808080" stroke-width="0.7"/>
<circle cx="632.5" cy="109.5" r="1.3" fill="#fff" stroke="#808080" stroke-width="0.7"/>
<circle cx="622.5" cy="119.5" r="1.3" fill="#fff" stroke="#808080" stroke-width="0.7"/>
<circle cx="632.5" cy="119.5" r="1.3" fill="#fff" stroke="#808080" stroke-width="0.7"/>
<rect x="619" y="107" width="1.3" height="15" fill="#000" shape-rendering="crispEdges"/>
<rect x="619" y="121" width="15" height="1.3" fill="#000" shape-rendering="crispEdges"/>
<polygon points="617.5,110 619.6,106.5 621.7,110" fill="#000" stroke="none" stroke-width="1"/>
<polygon points="631,119.5 634.5,121.6 631,123.7" fill="#000" stroke="none" stroke-width="1"/>
<rect x="642" y="107" width="1" height="15" fill="#808080" shape-rendering="crispEdges"/>
<rect x="653" y="107" width="1" height="15" fill="#808080" shape-rendering="crispEdges"/>
<line x1="642.7" y1="114" x2="657" y2="107" stroke="#000" stroke-width="1.1"/>
<line x1="642.7" y1="117.5" x2="657" y2="110.5" stroke="#000" stroke-width="1.1"/>
<line x1="642.7" y1="121" x2="657" y2="114" stroke="#000" stroke-width="1.1"/>
<rect x="663" y="103" width="1" height="24" fill="#a0a0a0" shape-rendering="crispEdges"/>
<rect x="664" y="103" width="1" height="24" fill="#fff" shape-rendering="crispEdges"/>
<rect x="668" y="105" width="1" height="19" fill="#fff" shape-rendering="crispEdges"/>
<rect x="669" y="105" width="1" height="20" fill="#a0a0a0" shape-rendering="crispEdges"/>
<rect x="668" y="124" width="1" height="1" fill="#a0a0a0" shape-rendering="crispEdges"/>
<rect x="676" y="108.5" width="7" height="1.2" fill="#000" shape-rendering="crispEdges"/>
<rect x="676" y="111" width="7" height="1.2" fill="#000" shape-rendering="crispEdges"/>
<rect x="676" y="113.5" width="7" height="1.2" fill="#000" shape-rendering="crispEdges"/>
<rect x="676" y="116" width="7" height="1.2" fill="#000" shape-rendering="crispEdges"/>
<rect x="676" y="118.5" width="7" height="1.2" fill="#000" shape-rendering="crispEdges"/>
<rect x="676" y="121" width="14" height="1.3" fill="#000" shape-rendering="crispEdges"/>
<rect x="683" y="107.5" width="1.3" height="14" fill="#000" shape-rendering="crispEdges"/>
<rect x="685" y="109" width="2" height="1" fill="#000" shape-rendering="crispEdges"/>
<rect x="685" y="112" width="2" height="1" fill="#000" shape-rendering="crispEdges"/>
<rect x="685" y="115" width="2" height="1" fill="#000" shape-rendering="crispEdges"/>
<rect x="685" y="118" width="2" height="1" fill="#000" shape-rendering="crispEdges"/>
<text x="687.5" y="113.5" fill="#000" font-size="5" font-weight="bold" font-family="'Liberation Sans','Noto Sans CJK SC',sans-serif">2</text>
<text x="687.5" y="119.5" fill="#000" font-size="5" font-weight="bold" font-family="'Liberation Sans','Noto Sans CJK SC',sans-serif">1</text>
<rect x="698" y="107" width="16" height="1.3" fill="#ff0000" shape-rendering="crispEdges"/>
<rect x="698" y="121.5" width="5" height="1.3" fill="#ff0000" shape-rendering="crispEdges"/>
<rect x="706" y="113" width="8" height="1.2" fill="#ff0000" shape-rendering="crispEdges"/>
<line x1="700.8" y1="122" x2="706.3" y2="107.5" stroke="#000" stroke-width="1.2"/>
<polyline points="706.3,107.5 710,111 713.6,108.5" fill="none" stroke="#000" stroke-width="1"/>
<text x="709.5" y="122.5" fill="#ff0000" font-size="10" font-weight="normal" font-family="'Liberation Sans','Noto Sans CJK SC',sans-serif" textLength="9" lengthAdjust="spacingAndGlyphs" text-anchor="middle">%</text>
<text x="729" y="121.5" fill="#000" font-size="16" font-weight="normal" font-family="'Liberation Sans','Noto Sans CJK SC',sans-serif" textLength="12" lengthAdjust="spacingAndGlyphs" text-anchor="middle">%</text>
<rect x="744" y="107" width="16" height="1.3" fill="#000" shape-rendering="crispEdges"/>
<rect x="752" y="110" width="8" height="1.3" fill="#000" shape-rendering="crispEdges"/>
<rect x="753" y="116" width="7" height="1.3" fill="#000" shape-rendering="crispEdges"/>
<rect x="744" y="121.5" width="16" height="1.3" fill="#000" shape-rendering="crispEdges"/>
<text x="748.5" y="121" fill="#ff0000" font-size="10" font-weight="normal" font-family="'Liberation Sans','Noto Sans CJK SC',sans-serif" textLength="9" lengthAdjust="spacingAndGlyphs" text-anchor="middle">%</text>
<circle cx="775" cy="114.7" r="7.6" fill="#f4f4f4" stroke="#909090" stroke-width="1"/>
<text x="775" y="119" fill="#808000" font-size="10.5" font-weight="500" font-family="'Noto Sans CJK SC','Liberation Sans',sans-serif" text-anchor="middle">金</text>
<rect x="790" y="107" width="16" height="1.3" fill="#000" shape-rendering="crispEdges"/>
<rect x="798" y="110" width="8" height="1.3" fill="#000" shape-rendering="crispEdges"/>
<rect x="799" y="116" width="7" height="1.3" fill="#000" shape-rendering="crispEdges"/>
<rect x="790" y="121.5" width="16" height="1.3" fill="#000" shape-rendering="crispEdges"/>
<text x="794.5" y="121" fill="#808000" font-size="10.5" font-weight="500" font-family="'Noto Sans CJK SC','Liberation Sans',sans-serif" text-anchor="middle">金</text>
<rect x="814.5" y="107" width="1.4" height="15" fill="#000" shape-rendering="crispEdges"/>
<rect x="813" y="121.5" width="5" height="1.3" fill="#000" shape-rendering="crispEdges"/>
<rect x="813" y="109" width="4.5" height="1.2" fill="#000" shape-rendering="crispEdges"/>
<rect x="813" y="111.5" width="4.5" height="1.2" fill="#000" shape-rendering="crispEdges"/>
<rect x="813" y="114" width="4.5" height="1.2" fill="#000" shape-rendering="crispEdges"/>
<rect x="813" y="116.5" width="4.5" height="1.2" fill="#000" shape-rendering="crispEdges"/>
<polygon points="823.2,110.3 831,114.1 830.6,118.1 821.5,120.7 820.2,118.7" fill="#b4b4b4" stroke="#000" stroke-width="1"/>
<line x1="824.5" y1="112.5" x2="828.5" y2="118.0" stroke="#ececec" stroke-width="2.2"/>
<polygon points="824.8,109.5 827,106.8 828.6,108.1 829.6,107.2 831,108.1 831,114.3 823.5,110.5" fill="#ff0000" stroke="none" stroke-width="1"/>
<line x1="825.2" y1="109.1" x2="820.2" y2="118.5" stroke="#000" stroke-width="1.1"/>
<polygon points="820.2,118.1 824,119.5 820.2,121.3" fill="#ff0000" stroke="none" stroke-width="1"/>
<rect x="836" y="107" width="16" height="1.3" fill="#ff0000" shape-rendering="crispEdges"/>
<rect x="836" y="121.5" width="16" height="1.3" fill="#ff0000" shape-rendering="crispEdges"/>
<rect x="836" y="114.2" width="16" height="1" fill="#000" shape-rendering="crispEdges"/>
<path d="M836.5 117 q2.5 -14 5 -2 q2 12 5 0 q2 -9 4.5 -6" fill="none" stroke="#808080" stroke-width="1.1"/>
<rect x="859" y="107" width="16" height="1.3" fill="#ff0000" shape-rendering="crispEdges"/>
<rect x="859" y="121.5" width="16" height="1.3" fill="#ff0000" shape-rendering="crispEdges"/>
<text x="867" y="119.5" fill="#808000" font-size="10.5" font-weight="500" font-family="'Noto Sans CJK SC','Liberation Sans',sans-serif" text-anchor="middle">金</text>
<line x1="882" y1="122.6" x2="898" y2="107" stroke="#000" stroke-width="1.1"/>
<rect x="890.7" y="113.6" width="6.5" height="1.2" fill="#000"/>
<rect x="886.8" y="117.7" width="10.4" height="1.2" fill="#000"/>
<rect x="883.4" y="120.9" width="13.8" height="1.2" fill="#000"/>
<text x="884.5" y="116" fill="#ff0000" font-size="12.5" font-weight="normal" font-family="'Liberation Sans','Noto Sans CJK SC',sans-serif" text-anchor="middle">J</text>
<line x1="905" y1="122.6" x2="921" y2="107" stroke="#000" stroke-width="1.1"/>
<rect x="913.7" y="113.6" width="6.5" height="1.2" fill="#000"/>
<rect x="909.8" y="117.7" width="10.4" height="1.2" fill="#000"/>
<rect x="906.4" y="120.9" width="13.8" height="1.2" fill="#000"/>
<text x="908.8" y="117" fill="#ff0000" font-size="13.5" font-weight="bold" font-family="'Liberation Sans','Noto Sans CJK SC',sans-serif" text-anchor="middle">F</text>
<line x1="928" y1="122.6" x2="944" y2="107" stroke="#000" stroke-width="1.1"/>
<rect x="936.7" y="113.6" width="6.5" height="1.2" fill="#000"/>
<rect x="932.8" y="117.7" width="10.4" height="1.2" fill="#000"/>
<rect x="929.4" y="120.9" width="13.8" height="1.2" fill="#000"/>
<text x="933" y="116.5" fill="#808000" font-size="10.5" font-weight="500" font-family="'Noto Sans CJK SC','Liberation Sans',sans-serif" text-anchor="middle">金</text>
<line x1="951" y1="122.6" x2="967" y2="107" stroke="#000" stroke-width="1.1"/>
<rect x="959.7" y="113.6" width="6.5" height="1.2" fill="#000"/>
<rect x="955.8" y="117.7" width="10.4" height="1.2" fill="#000"/>
<rect x="952.4" y="120.9" width="13.8" height="1.2" fill="#000"/>
<text x="956" y="116.5" fill="#ff0000" font-size="10.5" font-weight="500" font-family="'Noto Sans CJK SC','Liberation Sans',sans-serif" text-anchor="middle">神</text>
<line x1="974" y1="122.6" x2="990" y2="107" stroke="#000" stroke-width="1.1"/>
<rect x="982.7" y="113.6" width="6.5" height="1.2" fill="#000"/>
<rect x="978.8" y="117.7" width="10.4" height="1.2" fill="#000"/>
<rect x="975.4" y="120.9" width="13.8" height="1.2" fill="#000"/>
<text x="979" y="116.5" fill="#ff0000" font-size="11" font-weight="500" font-family="'Noto Sans CJK SC','Liberation Sans',sans-serif" text-anchor="middle">赢</text>
<line x1="997" y1="122.6" x2="1013" y2="107" stroke="#000" stroke-width="1.1"/>
<rect x="1005.7" y="113.6" width="6.5" height="1.2" fill="#000"/>
<rect x="1001.8" y="117.7" width="10.4" height="1.2" fill="#000"/>
<rect x="998.4" y="120.9" width="13.8" height="1.2" fill="#000"/>
<text x="1002" y="116.5" fill="#ff0000" font-size="10.5" font-weight="500" font-family="'Noto Sans CJK SC','Liberation Sans',sans-serif" text-anchor="middle">四</text>
</svg>
</body></html>
